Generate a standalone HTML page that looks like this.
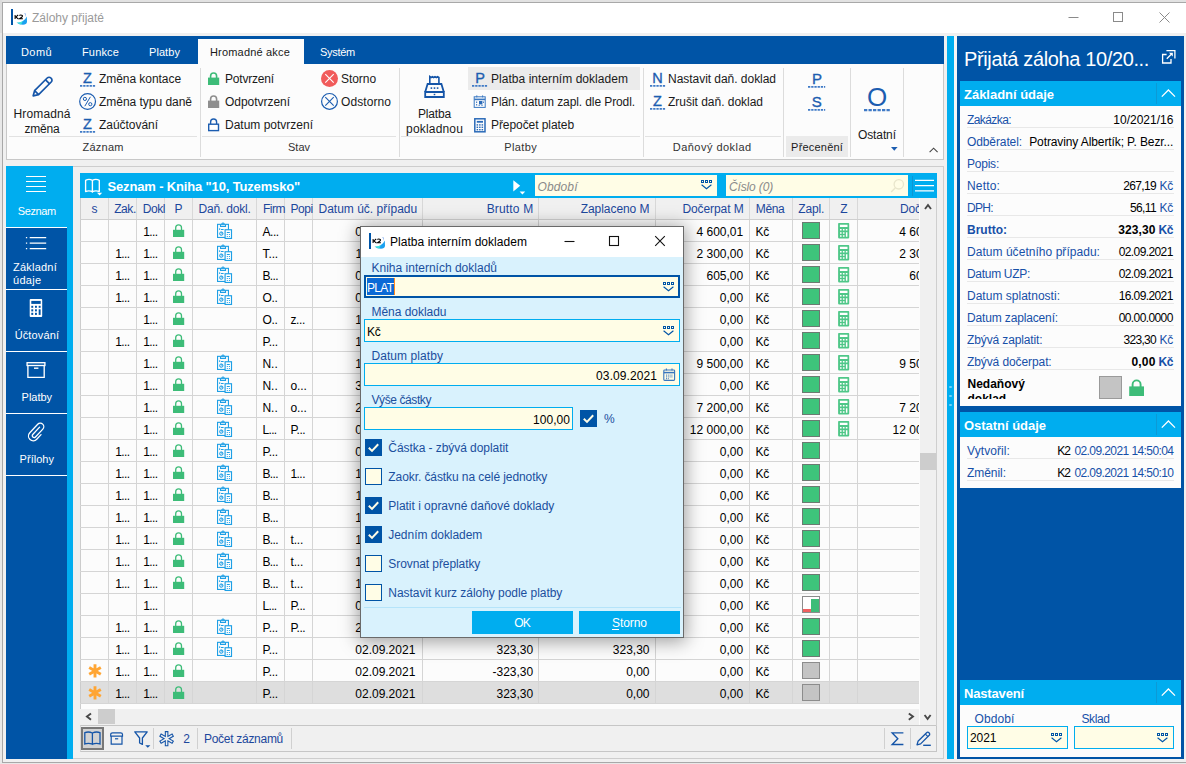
<!DOCTYPE html>
<html><head><meta charset="utf-8"><title>Zálohy přijaté</title>
<style>
html,body{margin:0;padding:0;}
body{width:1186px;height:764px;overflow:hidden;position:relative;background:#f0f0f0;font-family:"Liberation Sans", sans-serif;font-size:12px;}
div{position:absolute;box-sizing:border-box;}
svg{position:absolute;overflow:visible;}
.t{font-family:"Liberation Sans", sans-serif;}
</style></head><body>
<div style="left:0px;top:0px;width:1186px;height:764px;background:#e8e8e8;"></div><div style="left:0px;top:0px;width:1186px;height:2px;background:#e2e2e2;"></div><div style="left:0px;top:0px;width:2px;height:33px;background:#dcdcdc;"></div><div style="left:2px;top:2px;width:1190px;height:761px;background:#f0f0f0;border:1px solid #a8a8a8;"></div><div style="left:3px;top:3px;width:1183px;height:30px;background:#ffffff;"></div><div style="left:11px;top:9px;width:2px;height:16px;background:#0054a6;"></div><svg style="left:14px;top:14px" width="10" height="6" viewBox="0 0 10 6" ><path d="M1.1 1V4.9M4.2 1L1.9 2.95L4.2 4.9M5.4 1.7Q5.6 1 6.9 1Q8.6 1 8.6 2Q8.6 2.9 5.5 4.7H8.9" fill="none" stroke="#000" stroke-width="1.05"/></svg><svg style="left:15px;top:12px" width="13" height="14" viewBox="0 0 13 14"><path d="M1.5 10.5 Q5 11.5 8.5 8.5 Q11 6.5 11.8 4.5 L12 10 Q11.5 12.8 8 12.8 Q4 12.8 1.5 10.5Z" fill="#1aa0f0"/><path d="M1.5 10.5 Q5 11 8 9 L6 12.5Z" fill="#40e8d8"/><path d="M9.5 1 L11 5 L10.3 1.2Z" fill="#3a7be0"/></svg><div class="t" style="top:11.14px;font-size:12px;color:#9a9a9a;line-height:normal;white-space:nowrap;letter-spacing:-0.003px;left:32px;">Zálohy přijaté</div><svg style="left:1060px;top:8px" width="120" height="20"><path d="M8.5 9.5h10" stroke="#8a8a8a" stroke-width="1" fill="none"/><rect x="53.5" y="4.5" width="9" height="9" stroke="#8a8a8a" fill="none"/><path d="M99.5 4.5l10 10M109.5 4.5l-10 10" stroke="#8a8a8a" stroke-width="1" fill="none"/></svg><div style="left:6px;top:36px;width:938px;height:28px;background:#0054a6;"></div><div style="left:6px;top:64px;width:938px;height:96px;background:#fcfcfc;border:1px solid #c8c8c8;border-top:none;"></div><div style="left:198px;top:39px;width:106px;height:25px;background:#fcfcfc;"></div><div class="t" style="top:45.54px;font-size:11px;color:#ffffff;line-height:normal;white-space:nowrap;letter-spacing:0.414px;left:21px;">Domů</div><div class="t" style="top:45.54px;font-size:11px;color:#ffffff;line-height:normal;white-space:nowrap;letter-spacing:0.154px;left:82px;">Funkce</div><div class="t" style="top:45.54px;font-size:11px;color:#ffffff;line-height:normal;white-space:nowrap;letter-spacing:0.070px;left:149px;">Platby</div><div class="t" style="top:45.54px;font-size:11px;color:#1a1a1a;line-height:normal;white-space:nowrap;letter-spacing:0.180px;left:210px;">Hromadné akce</div><div class="t" style="top:45.54px;font-size:11px;color:#ffffff;line-height:normal;white-space:nowrap;letter-spacing:-0.281px;left:320px;">Systém</div><div style="left:200px;top:68px;width:1px;height:89px;background:#dcdcdc;"></div><div style="left:399px;top:68px;width:1px;height:89px;background:#dcdcdc;"></div><div style="left:643px;top:68px;width:1px;height:89px;background:#dcdcdc;"></div><div style="left:783px;top:68px;width:1px;height:89px;background:#dcdcdc;"></div><div style="left:850px;top:68px;width:1px;height:89px;background:#dcdcdc;"></div><div style="left:903px;top:68px;width:1px;height:89px;background:#dcdcdc;"></div><div style="left:9px;top:136px;width:188px;height:1px;background:#e2e2e2;"></div><div style="left:202px;top:136px;width:194px;height:1px;background:#e2e2e2;"></div><div style="left:401px;top:136px;width:239px;height:1px;background:#e2e2e2;"></div><div style="left:645px;top:136px;width:136px;height:1px;background:#e2e2e2;"></div><div style="left:468px;top:67px;width:172px;height:23px;background:#ebebeb;"></div><div style="left:786px;top:136px;width:62px;height:21px;background:#ebebeb;"></div><div class="t" style="top:140.54px;font-size:11px;color:#333333;line-height:normal;white-space:nowrap;letter-spacing:0.208px;left:-196.90px;width:600px;text-align:center;">Záznam</div><div class="t" style="top:140.54px;font-size:11px;color:#333333;line-height:normal;white-space:nowrap;letter-spacing:-0.004px;left:-1.00px;width:600px;text-align:center;">Stav</div><div class="t" style="top:140.54px;font-size:11px;color:#333333;line-height:normal;white-space:nowrap;letter-spacing:0.404px;left:220.70px;width:600px;text-align:center;">Platby</div><div class="t" style="top:140.54px;font-size:11px;color:#333333;line-height:normal;white-space:nowrap;letter-spacing:0.478px;left:412.24px;width:600px;text-align:center;">Daňový doklad</div><div class="t" style="top:140.54px;font-size:11px;color:#1a1a1a;line-height:normal;white-space:nowrap;letter-spacing:0.205px;left:517.10px;width:600px;text-align:center;">Přecenění</div><div class="t" style="top:107.14px;font-size:12px;color:#1a1a1a;line-height:normal;white-space:nowrap;letter-spacing:0.121px;left:-257.94px;width:600px;text-align:center;">Hromadná</div><div class="t" style="top:122.14px;font-size:12px;color:#1a1a1a;line-height:normal;white-space:nowrap;letter-spacing:-0.206px;left:-258.10px;width:600px;text-align:center;">změna</div><div class="t" style="top:72.14px;font-size:12px;color:#1a1a1a;line-height:normal;white-space:nowrap;letter-spacing:-0.055px;left:99px;">Změna kontace</div><div class="t" style="top:95.14px;font-size:12px;color:#1a1a1a;line-height:normal;white-space:nowrap;letter-spacing:-0.027px;left:99px;">Změna typu daně</div><div class="t" style="top:118.14px;font-size:12px;color:#1a1a1a;line-height:normal;white-space:nowrap;letter-spacing:-0.037px;left:99px;">Zaúčtování</div><div class="t" style="top:72.14px;font-size:12px;color:#1a1a1a;line-height:normal;white-space:nowrap;letter-spacing:-0.189px;left:225px;">Potvrzení</div><div class="t" style="top:95.14px;font-size:12px;color:#1a1a1a;line-height:normal;white-space:nowrap;letter-spacing:-0.034px;left:225px;">Odpotvrzení</div><div class="t" style="top:118.14px;font-size:12px;color:#1a1a1a;line-height:normal;white-space:nowrap;letter-spacing:-0.003px;left:225px;">Datum potvrzení</div><div class="t" style="top:72.14px;font-size:12px;color:#1a1a1a;line-height:normal;white-space:nowrap;letter-spacing:-0.060px;left:341px;">Storno</div><div class="t" style="top:95.14px;font-size:12px;color:#1a1a1a;line-height:normal;white-space:nowrap;letter-spacing:0.080px;left:341px;">Odstorno</div><div class="t" style="top:107.14px;font-size:12px;color:#1a1a1a;line-height:normal;white-space:nowrap;letter-spacing:-0.172px;left:134.41px;width:600px;text-align:center;">Platba</div><div class="t" style="top:122.14px;font-size:12px;color:#1a1a1a;line-height:normal;white-space:nowrap;letter-spacing:0.179px;left:134.59px;width:600px;text-align:center;">pokladnou</div><div class="t" style="top:72.14px;font-size:12px;color:#1a1a1a;line-height:normal;white-space:nowrap;letter-spacing:0.038px;left:491px;">Platba interním dokladem</div><div class="t" style="top:95.14px;font-size:12px;color:#1a1a1a;line-height:normal;white-space:nowrap;letter-spacing:-0.098px;left:491px;">Plán. datum zapl. dle Prodl.</div><div class="t" style="top:118.14px;font-size:12px;color:#1a1a1a;line-height:normal;white-space:nowrap;letter-spacing:-0.071px;left:491px;">Přepočet plateb</div><div class="t" style="top:72.14px;font-size:12px;color:#1a1a1a;line-height:normal;white-space:nowrap;letter-spacing:-0.037px;left:668px;">Nastavit daň. doklad</div><div class="t" style="top:95.14px;font-size:12px;color:#1a1a1a;line-height:normal;white-space:nowrap;letter-spacing:-0.022px;left:668px;">Zrušit daň. doklad</div><div class="t" style="top:128.14px;font-size:12px;color:#1a1a1a;line-height:normal;white-space:nowrap;letter-spacing:-0.098px;left:576.95px;width:600px;text-align:center;">Ostatní</div><svg style="left:30px;top:74px" width="26" height="26" viewBox="0 0 26 26" ><g fill="none" stroke="#1555a8" stroke-width="1.7" stroke-linejoin="round"><path d="M3.2 21.8 L4.6 16.6 L17.2 4 a2.6 2.6 0 0 1 3.7 0 l0.3 0.3 a2.6 2.6 0 0 1 0 3.7 L8.6 20.6 Z"/><path d="M15.6 5.8 L19.6 9.8"/><path d="M4.8 16.8 L8.4 20.4"/></g></svg><div class="t" style="top:70.38px;font-size:14.5px;color:#1c5db0;line-height:normal;white-space:nowrap;left:-212.50px;width:600px;text-align:center;-webkit-text-stroke:0.35px #1c5db0;">Z</div><svg style="left:80px;top:85.1px" width="16" height="3" viewBox="0 0 16 3" ><path d="M0 0.9H15.2" stroke="#3f7ac6" stroke-width="1.8" stroke-dasharray="2.3 0.9" fill="none"/></svg><div class="t" style="top:116.38px;font-size:14.5px;color:#1c5db0;line-height:normal;white-space:nowrap;left:-212.50px;width:600px;text-align:center;-webkit-text-stroke:0.35px #1c5db0;">Z</div><svg style="left:80px;top:131.1px" width="16" height="3" viewBox="0 0 16 3" ><path d="M0 0.9H15.2" stroke="#3f7ac6" stroke-width="1.8" stroke-dasharray="2.3 0.9" fill="none"/></svg><svg style="left:78px;top:92px" width="20" height="20" viewBox="0 0 20 20" ><circle cx="9.6" cy="9.5" r="7.9" fill="none" stroke="#1c5db0" stroke-width="1.2"/><circle cx="6.9" cy="6.9" r="1.6" fill="none" stroke="#1c5db0" stroke-width="1"/><circle cx="12.3" cy="12.2" r="1.6" fill="none" stroke="#1c5db0" stroke-width="1"/><path d="M12.4 4.8 L6.8 14.2" stroke="#1c5db0" stroke-width="1" fill="none"/></svg><svg style="left:208px;top:72px" width="12" height="14" viewBox="0 0 12 14" ><path d="M2.6 6.5 V4 a3 3 0 0 1 6 0 V6.5" fill="none" stroke="#3dbc78" stroke-width="1.6"/><rect x="0" y="5.6" width="11.2" height="7.4" fill="#3dbc78"/></svg><svg style="left:208px;top:95px" width="12" height="14" viewBox="0 0 12 14" ><path d="M2.6 6.5 V4 a3 3 0 0 1 6 0 V6.5" fill="none" stroke="#8e8e8e" stroke-width="1.6"/><rect x="0" y="5.6" width="11.2" height="7.4" fill="#8e8e8e"/></svg><svg style="left:208px;top:118px" width="12" height="14" viewBox="0 0 12 14" ><path d="M2.6 6 V4 a3 3 0 0 1 6 0 V6" fill="none" stroke="#1c5db0" stroke-width="1.4"/><rect x="0.7" y="6.2" width="9.8" height="6.4" fill="#fff" stroke="#1c5db0" stroke-width="1.4"/></svg><svg style="left:320px;top:69px" width="20" height="20" viewBox="0 0 20 20" ><circle cx="9.5" cy="9.4" r="8.5" fill="#f15b5b"/><path d="M5.3 5.2l8.4 8.4M13.7 5.2l-8.4 8.4" stroke="#fff" stroke-width="1.1"/></svg><svg style="left:320px;top:92px" width="20" height="20" viewBox="0 0 20 20" ><circle cx="9.5" cy="9.4" r="7.9" fill="none" stroke="#1c5db0" stroke-width="1.2"/><path d="M5.3 5.2l8.4 8.4M13.7 5.2l-8.4 8.4" stroke="#1c5db0" stroke-width="1.1"/></svg><svg style="left:423px;top:74px" width="24" height="26" viewBox="0 0 24 26" ><g fill="none" stroke="#1555a8" stroke-width="1.8" stroke-linejoin="miter"><path d="M2.2 18 H20.8 V23 H2.2 Z"/><path d="M2.2 18 L4.6 10 H18.4 L20.8 18"/><path d="M6.8 10 V2.6 l1.3 .9 1.3 -.9 1.3 .9 1.3 -.9 1.3 .9 1.3 -.9 1.3 .9 V10" stroke-width="1.6"/></g><g fill="#1555a8"><rect x="7.6" y="13.3" width="1.6" height="1.6"/><rect x="10.7" y="13.3" width="1.6" height="1.6"/><rect x="13.8" y="13.3" width="1.6" height="1.6"/><rect x="10.7" y="19.8" width="1.6" height="1.4"/></g></svg><div class="t" style="top:70.38px;font-size:14.5px;color:#1c5db0;line-height:normal;white-space:nowrap;left:180.20px;width:600px;text-align:center;-webkit-text-stroke:0.35px #1c5db0;">P</div><svg style="left:472px;top:85.1px" width="16" height="3" viewBox="0 0 16 3" ><path d="M0 0.9H15.2" stroke="#3f7ac6" stroke-width="1.8" stroke-dasharray="2.3 0.9" fill="none"/></svg><svg style="left:473px;top:95px" width="14" height="14" viewBox="0 0 14 14" ><g fill="none" stroke="#3a78c2" stroke-width="1"><rect x="1.2" y="1.8" width="11" height="10.6"/><path d="M1.2 4.4H12.2" stroke-width="1.6"/><path d="M3.8 0.4V2.4M9.6 0.4V2.4"/></g><g fill="#2a6ab8"><rect x="6" y="6" width="3.4" height="3.4"/><rect x="3" y="6.6" width="1.2" height="1.2"/><rect x="3" y="9.2" width="1.2" height="1.2"/><rect x="5.6" y="9.8" width="1.2" height="1"/><rect x="10" y="6.6" width="1" height="1.2"/><rect x="8.4" y="9.8" width="1.2" height="1"/></g></svg><svg style="left:474px;top:118px" width="12" height="15" viewBox="0 0 12 15" ><rect x="0.8" y="0.8" width="10.2" height="13" fill="none" stroke="#2a6ab8" stroke-width="1.5"/><rect x="2.8" y="2.9" width="6.2" height="1.8" fill="#2a6ab8"/><g fill="#2a6ab8"><rect x="2.6" y="6.2" width="1.5" height="1.4"/><rect x="5.1" y="6.2" width="1.5" height="1.4"/><rect x="7.6" y="6.2" width="1.5" height="1.4"/><rect x="2.6" y="8.6" width="1.5" height="1.4"/><rect x="5.1" y="8.6" width="1.5" height="1.4"/><rect x="7.6" y="8.6" width="1.5" height="1.4"/><rect x="2.6" y="11" width="1.5" height="1.4"/><rect x="5.1" y="11" width="1.5" height="1.4"/><rect x="7.6" y="11" width="1.5" height="1.4"/></g></svg><div class="t" style="top:70.38px;font-size:14.5px;color:#1c5db0;line-height:normal;white-space:nowrap;left:357.50px;width:600px;text-align:center;-webkit-text-stroke:0.35px #1c5db0;">N</div><svg style="left:650px;top:85.1px" width="16" height="3" viewBox="0 0 16 3" ><path d="M0 0.9H15.2" stroke="#3f7ac6" stroke-width="1.8" stroke-dasharray="2.3 0.9" fill="none"/></svg><div class="t" style="top:93.38px;font-size:14.5px;color:#1c5db0;line-height:normal;white-space:nowrap;left:357.50px;width:600px;text-align:center;-webkit-text-stroke:0.35px #1c5db0;">Z</div><svg style="left:650px;top:108.1px" width="16" height="3" viewBox="0 0 16 3" ><path d="M0 0.9H15.2" stroke="#3f7ac6" stroke-width="1.8" stroke-dasharray="2.3 0.9" fill="none"/></svg><div class="t" style="top:70.12px;font-size:15px;color:#1c5db0;line-height:normal;white-space:nowrap;left:517.00px;width:600px;text-align:center;-webkit-text-stroke:0.35px #1c5db0;">P</div><svg style="left:808px;top:86.1px" width="18" height="3" viewBox="0 0 18 3" ><path d="M0 0.9H17.2" stroke="#3f7ac6" stroke-width="1.8" stroke-dasharray="2.3 0.9" fill="none"/></svg><div class="t" style="top:93.22px;font-size:15px;color:#1c5db0;line-height:normal;white-space:nowrap;left:516.70px;width:600px;text-align:center;-webkit-text-stroke:0.35px #1c5db0;">S</div><svg style="left:808px;top:108.8px" width="18" height="3" viewBox="0 0 18 3" ><path d="M0 0.9H17.2" stroke="#3f7ac6" stroke-width="1.8" stroke-dasharray="2.3 0.9" fill="none"/></svg><div class="t" style="top:82.27px;font-size:26px;color:#1c5db0;line-height:normal;white-space:nowrap;left:577.20px;width:600px;text-align:center;">O</div><svg style="left:864px;top:108.9px" width="27" height="3" viewBox="0 0 27 3" ><path d="M0 1.15H26.2" stroke="#3f7ac6" stroke-width="2.3" stroke-dasharray="3.3 1.2" fill="none"/></svg><svg style="left:891px;top:147px" width="8" height="5" viewBox="0 0 8 5" ><path d="M0 0H6.6L3.3 3.8Z" fill="#1c5db0"/></svg><svg style="left:929px;top:147px" width="10" height="6" viewBox="0 0 10 6" ><path d="M0.6 5.2L4.6 1.2L8.6 5.2" fill="none" stroke="#444" stroke-width="1.1"/></svg><div style="left:6px;top:166px;width:67px;height:593px;background:#0054a6;"></div><div style="left:67px;top:166px;width:6px;height:593px;background:#00adef;"></div><div style="left:6px;top:166px;width:67px;height:61px;background:#00adef;"></div><div style="left:6px;top:227px;width:61px;height:1px;background:#ffffff;"></div><div style="left:6px;top:289px;width:61px;height:1px;background:#ffffff;"></div><div style="left:6px;top:351px;width:61px;height:1px;background:#ffffff;"></div><div style="left:6px;top:413px;width:61px;height:1px;background:#ffffff;"></div><div style="left:6px;top:475px;width:61px;height:1px;background:#ffffff;"></div><div style="left:73px;top:166px;width:871px;height:593px;background:#f0f0f0;border:1px solid #cdcdcd;border-left:none;"></div><svg style="left:26px;top:176px" width="20" height="16" viewBox="0 0 20 16" ><path d="M0 .5H20M0 5.5H20M0 10.5H20M0 15.5H20" stroke="#fff" stroke-width="1.1"/></svg><div class="t" style="top:204.84px;font-size:11px;color:#ffffff;line-height:normal;white-space:nowrap;letter-spacing:-0.393px;left:-263.20px;width:600px;text-align:center;">Seznam</div><svg style="left:25px;top:236px" width="24" height="15" viewBox="0 0 24 15" ><path d="M4.7 1.5H21.2M4.7 7.1H21.2M4.7 12.5H21.2" stroke="#fff" stroke-width="1.25"/><path d="M0.9 1.5H2.2M0.9 7.1H2.2M0.9 12.5H2.2" stroke="#fff" stroke-width="1.25"/></svg><div class="t" style="top:261.04px;font-size:11px;color:#ffffff;line-height:normal;white-space:nowrap;letter-spacing:0.225px;left:13px;">Základní</div><div class="t" style="top:274.04px;font-size:11px;color:#ffffff;line-height:normal;white-space:nowrap;letter-spacing:0.316px;left:13px;">údaje</div><svg style="left:29px;top:298px" width="14" height="20" viewBox="0 0 14 20" ><rect x="0.7" y="1" width="12.5" height="18" rx="0.9" fill="#fff"/><g fill="#0054a6"><rect x="2.3" y="2.9" width="9.4" height="3"/><rect x="2.3" y="7.8" width="1.9" height="2"/><rect x="6" y="7.8" width="1.9" height="2"/><rect x="9.7" y="7.8" width="1.9" height="2"/><rect x="2.3" y="11.3" width="1.9" height="2.1"/><rect x="6" y="11.3" width="1.9" height="2.1"/><rect x="2.3" y="14.8" width="1.9" height="2.1"/><rect x="6" y="14.8" width="1.9" height="2.1"/><rect x="9.7" y="11.3" width="1.9" height="5.6"/></g></svg><div class="t" style="top:328.64px;font-size:11px;color:#ffffff;line-height:normal;white-space:nowrap;letter-spacing:0.135px;left:-263.13px;width:600px;text-align:center;">Účtování</div><svg style="left:26px;top:361px" width="20" height="18" viewBox="0 0 20 18" ><rect x="1.1" y="1.7" width="17.8" height="2.8" fill="none" stroke="#fff" stroke-width="1.35"/><path d="M1.9 4.5V16.4H18.2V4.5" fill="none" stroke="#fff" stroke-width="1.35"/><path d="M8 7.2H12.4" stroke="#fff" stroke-width="1.4"/></svg><div class="t" style="top:390.84px;font-size:11px;color:#ffffff;line-height:normal;white-space:nowrap;letter-spacing:-0.030px;left:-263.21px;width:600px;text-align:center;">Platby</div><svg style="left:16px;top:412px" width="40" height="36" viewBox="0 0 40 36" ><path transform="translate(20,20) rotate(43)" d="M5.5 -1.5V4.8A4.75 4.75 0 0 1 -4 4.8V-6.8A3.5 3.5 0 0 1 3 -6.8V4A1.85 1.85 0 0 1 -0.7 4V-6" fill="none" stroke="#fff" stroke-width="1.3" stroke-linecap="round"/></svg><div class="t" style="top:452.74px;font-size:11px;color:#ffffff;line-height:normal;white-space:nowrap;letter-spacing:0.021px;left:-263.19px;width:600px;text-align:center;">Přílohy</div><div style="left:80px;top:173px;width:857px;height:25px;background:#00adef;"></div><svg style="left:84px;top:178px" width="22" height="19" viewBox="0 0 22 19" ><path d="M1.6 2.4 Q5 0.4 8.4 2.4 Q11.8 0.4 15.3 2.4 V13.5 Q11.8 12.2 8.4 13.6 Q5 12.2 1.6 13.5Z M8.4 2.4V14.8" fill="none" stroke="#fff" stroke-width="1.35" stroke-linejoin="round"/><path d="M13 14.8H18.2L15.6 17.4Z" fill="#fff"/></svg><div class="t" style="top:178.83px;font-size:13px;color:#ffffff;line-height:normal;white-space:nowrap;font-weight:bold;letter-spacing:-0.156px;left:107.5px;">Seznam - Kniha "10, Tuzemsko"</div><svg style="left:513px;top:180px" width="12" height="14" viewBox="0 0 12 14" ><path d="M0.3 0.2V11.4L7.2 5.8Z" fill="#fff"/><path d="M6.6 11.6H12.2L9.4 14.4Z" fill="#fff"/></svg><div style="left:535px;top:175px;width:182px;height:21px;background:#fffde6;"></div><div class="t" style="top:179.74px;font-size:12px;color:#8a8a8a;line-height:normal;white-space:nowrap;font-style:italic;letter-spacing:0.104px;left:537.6px;">Období</div><div style="left:726px;top:175px;width:182px;height:21px;background:#fffde6;"></div><div class="t" style="top:179.74px;font-size:12px;color:#8a8a8a;line-height:normal;white-space:nowrap;font-style:italic;letter-spacing:-0.149px;left:729px;">Číslo (0)</div><svg style="left:701px;top:180.4px" width="12" height="10" viewBox="0 0 12 10" ><g fill="none" stroke="#0054a6" stroke-width="1"><rect x="0.5" y="0.5" width="2" height="2"/><rect x="4.5" y="0.5" width="2" height="2"/><rect x="8.5" y="0.5" width="2" height="2"/><path d="M0.6 4.8L5.5 8.8L10.4 4.8" stroke-width="1.1"/></g></svg><svg style="left:888px;top:177px" width="18" height="18" viewBox="0 0 18 18" ><circle cx="10.8" cy="7.3" r="4.7" fill="none" stroke="#e9e6cc" stroke-width="1.3"/><path d="M7.4 10.8L3.2 15" stroke="#e9e6cc" stroke-width="1.4"/></svg><div style="left:912px;top:176px;width:1px;height:20px;background:#0c96d4;"></div><svg style="left:915px;top:179px" width="20" height="14" viewBox="0 0 20 14" ><path d="M0 1.4H19M0 6.6H19M0 11.8H19" stroke="#fff" stroke-width="1.3"/></svg><div style="left:80px;top:198px;width:857px;height:527px;background:#f0f0f0;"></div><div style="left:80px;top:220px;width:840px;height:483px;background:#fcfcfc;"></div><div style="left:80px;top:703px;width:840px;height:6px;background:#fcfcfc;"></div><div style="left:80px;top:681px;width:840px;height:22px;background:#dedede;"></div><div style="left:108px;top:198px;width:1px;height:21px;background:#d8d8d8;"></div><div style="left:108px;top:220px;width:1px;height:483px;background:#d5d5d5;"></div><div style="left:136px;top:198px;width:1px;height:21px;background:#d8d8d8;"></div><div style="left:136px;top:220px;width:1px;height:483px;background:#d5d5d5;"></div><div style="left:164px;top:198px;width:1px;height:21px;background:#d8d8d8;"></div><div style="left:164px;top:220px;width:1px;height:483px;background:#d5d5d5;"></div><div style="left:192px;top:198px;width:1px;height:21px;background:#d8d8d8;"></div><div style="left:192px;top:220px;width:1px;height:483px;background:#d5d5d5;"></div><div style="left:256px;top:198px;width:1px;height:21px;background:#d8d8d8;"></div><div style="left:256px;top:220px;width:1px;height:483px;background:#d5d5d5;"></div><div style="left:284px;top:198px;width:1px;height:21px;background:#d8d8d8;"></div><div style="left:284px;top:220px;width:1px;height:483px;background:#d5d5d5;"></div><div style="left:312px;top:198px;width:1px;height:21px;background:#d8d8d8;"></div><div style="left:312px;top:220px;width:1px;height:483px;background:#d5d5d5;"></div><div style="left:422px;top:198px;width:1px;height:21px;background:#d8d8d8;"></div><div style="left:422px;top:220px;width:1px;height:483px;background:#d5d5d5;"></div><div style="left:538px;top:198px;width:1px;height:21px;background:#d8d8d8;"></div><div style="left:538px;top:220px;width:1px;height:483px;background:#d5d5d5;"></div><div style="left:655px;top:198px;width:1px;height:21px;background:#d8d8d8;"></div><div style="left:655px;top:220px;width:1px;height:483px;background:#d5d5d5;"></div><div style="left:749px;top:198px;width:1px;height:21px;background:#d8d8d8;"></div><div style="left:749px;top:220px;width:1px;height:483px;background:#d5d5d5;"></div><div style="left:792px;top:198px;width:1px;height:21px;background:#d8d8d8;"></div><div style="left:792px;top:220px;width:1px;height:483px;background:#d5d5d5;"></div><div style="left:829px;top:198px;width:1px;height:21px;background:#d8d8d8;"></div><div style="left:829px;top:220px;width:1px;height:483px;background:#d5d5d5;"></div><div style="left:857px;top:198px;width:1px;height:21px;background:#d8d8d8;"></div><div style="left:857px;top:220px;width:1px;height:483px;background:#d5d5d5;"></div><div style="left:80px;top:198px;width:1px;height:511px;background:#cccccc;"></div><div style="left:80px;top:219px;width:840px;height:1px;background:#cfcfcf;"></div><div style="left:80px;top:241px;width:840px;height:1px;background:#d5d5d5;"></div><div style="left:80px;top:263px;width:840px;height:1px;background:#d5d5d5;"></div><div style="left:80px;top:285px;width:840px;height:1px;background:#d5d5d5;"></div><div style="left:80px;top:307px;width:840px;height:1px;background:#d5d5d5;"></div><div style="left:80px;top:329px;width:840px;height:1px;background:#d5d5d5;"></div><div style="left:80px;top:351px;width:840px;height:1px;background:#d5d5d5;"></div><div style="left:80px;top:373px;width:840px;height:1px;background:#d5d5d5;"></div><div style="left:80px;top:395px;width:840px;height:1px;background:#d5d5d5;"></div><div style="left:80px;top:417px;width:840px;height:1px;background:#d5d5d5;"></div><div style="left:80px;top:439px;width:840px;height:1px;background:#d5d5d5;"></div><div style="left:80px;top:461px;width:840px;height:1px;background:#d5d5d5;"></div><div style="left:80px;top:483px;width:840px;height:1px;background:#d5d5d5;"></div><div style="left:80px;top:505px;width:840px;height:1px;background:#d5d5d5;"></div><div style="left:80px;top:527px;width:840px;height:1px;background:#d5d5d5;"></div><div style="left:80px;top:549px;width:840px;height:1px;background:#d5d5d5;"></div><div style="left:80px;top:571px;width:840px;height:1px;background:#d5d5d5;"></div><div style="left:80px;top:593px;width:840px;height:1px;background:#d5d5d5;"></div><div style="left:80px;top:615px;width:840px;height:1px;background:#d5d5d5;"></div><div style="left:80px;top:637px;width:840px;height:1px;background:#d5d5d5;"></div><div style="left:80px;top:659px;width:840px;height:1px;background:#d5d5d5;"></div><div style="left:80px;top:681px;width:840px;height:1px;background:#d5d5d5;"></div><div style="left:80px;top:703px;width:840px;height:1px;background:#d5d5d5;"></div><div style="left:80px;top:198px;width:840px;height:510px;overflow:hidden;"><div class="t" style="top:3.74px;font-size:12px;color:#1c479c;line-height:normal;white-space:nowrap;left:-185.40px;width:400px;text-align:center;">s</div><div class="t" style="top:3.74px;font-size:12px;color:#1c479c;line-height:normal;white-space:nowrap;letter-spacing:-0.436px;left:34.2px;width:22px;overflow:hidden;">Zak.</div><div class="t" style="top:3.74px;font-size:12px;color:#1c479c;line-height:normal;white-space:nowrap;letter-spacing:-0.454px;left:62.80000000000001px;width:23px;overflow:hidden;">Dokl</div><div class="t" style="top:3.74px;font-size:12px;color:#1c479c;line-height:normal;white-space:nowrap;left:-101.50px;width:400px;text-align:center;">P</div><div class="t" style="top:3.74px;font-size:12px;color:#1c479c;line-height:normal;white-space:nowrap;letter-spacing:-0.203px;left:-55.40px;width:400px;text-align:center;">Daň. dokl.</div><div class="t" style="top:3.74px;font-size:12px;color:#1c479c;line-height:normal;white-space:nowrap;letter-spacing:-0.500px;left:183px;width:23px;overflow:hidden;">Firm</div><div class="t" style="top:3.74px;font-size:12px;color:#1c479c;line-height:normal;white-space:nowrap;letter-spacing:-0.458px;left:210.5px;width:23px;overflow:hidden;">Popi</div><div class="t" style="top:3.74px;font-size:12px;color:#1c479c;line-height:normal;white-space:nowrap;letter-spacing:-0.001px;left:238.5px;">Datum úč. případu</div><div class="t" style="top:3.74px;font-size:12px;color:#1c479c;line-height:normal;white-space:nowrap;letter-spacing:0.168px;left:53.37px;width:400px;text-align:right;">Brutto M</div><div class="t" style="top:3.74px;font-size:12px;color:#1c479c;line-height:normal;white-space:nowrap;letter-spacing:-0.061px;left:169.44px;width:400px;text-align:right;">Zaplaceno M</div><div class="t" style="top:3.74px;font-size:12px;color:#1c479c;line-height:normal;white-space:nowrap;letter-spacing:-0.083px;left:263.62px;width:400px;text-align:right;">Dočerpat M</div><div class="t" style="top:3.74px;font-size:12px;color:#1c479c;line-height:normal;white-space:nowrap;letter-spacing:-0.308px;left:675.7px;">Měna</div><div class="t" style="top:3.74px;font-size:12px;color:#1c479c;line-height:normal;white-space:nowrap;letter-spacing:-0.138px;left:718.2px;">Zapl.</div><div class="t" style="top:3.74px;font-size:12px;color:#1c479c;line-height:normal;white-space:nowrap;left:563.80px;width:400px;text-align:center;">Z</div><div class="t" style="top:3.74px;font-size:12px;color:#1c479c;line-height:normal;white-space:nowrap;letter-spacing:-0.213px;left:820px;">Dočerpat</div><div class="t" style="top:26.84px;font-size:12px;color:#000;line-height:normal;white-space:nowrap;letter-spacing:-0.572px;left:63.19999999999999px;">1...</div><svg style="left:93px;top:26px" width="12" height="14"><path d="M2.7 6.5 V3.7 a2.9 2.9 0 0 1 5.8 0 V6.5" fill="none" stroke="#3dbc78" stroke-width="1.3"/><rect x="0" y="5.8" width="11.2" height="7.2" fill="#3dbc78"/></svg><svg style="left:137px;top:24px" width="16" height="18"><g fill="none" stroke="#1e9fe5" stroke-width="1.1"><rect x="0.55" y="2.35" width="10.9" height="13.1"/><path d="M3.5 2.4V4.4H8.5V2.4M4.6 2.2Q6 -0.2 7.4 2.2"/><circle cx="4.3" cy="11.6" r="1.7" fill="#cfeaf9" stroke-width="1"/></g><rect x="8.1" y="7.75" width="6.4" height="8.7" fill="#fff" stroke="#1e9fe5" stroke-width="1.15"/><path fill="#1e9fe5" d="M2.2 6.3h1v1.8h-1zM4 6.9h2.6v1H4zM9.8 10h3v1h-3zM9.8 11.9h1v1h-1zM11.9 11.9h1v1h-1zM9.8 13.9h1v1h-1zM11.9 13.9h1v1h-1zM4.3 11.6V9.9A1.7 1.7 0 0 1 6 11.6Z"/></svg><div class="t" style="top:26.84px;font-size:12px;color:#000;line-height:normal;white-space:nowrap;letter-spacing:-0.479px;left:182.5px;">A...</div><div class="t" style="top:26.84px;font-size:12px;color:#000;line-height:normal;white-space:nowrap;letter-spacing:-0.006px;left:-64.71px;width:400px;text-align:right;">02.02.2021</div><div class="t" style="top:26.84px;font-size:12px;color:#000;line-height:normal;white-space:nowrap;left:53.20px;width:400px;text-align:right;">4 600,01</div><div class="t" style="top:26.84px;font-size:12px;color:#000;line-height:normal;white-space:nowrap;left:169.50px;width:400px;text-align:right;">0,00</div><div class="t" style="top:26.84px;font-size:12px;color:#000;line-height:normal;white-space:nowrap;left:263.20px;width:400px;text-align:right;">4 600,01</div><div class="t" style="top:26.84px;font-size:12px;color:#000;line-height:normal;white-space:nowrap;letter-spacing:-0.258px;left:675.5px;">Kč</div><div style="left:722px;top:24px;width:18px;height:17px;background:#3ec47b;border:1px solid #6c7a72;"></div><svg style="left:758px;top:25px" width="12" height="16"><rect x="0.1" y="0" width="11.1" height="15.4" rx="0.8" fill="#4fc788"/><path fill="#fff" d="M1.9 1.7h7.6v2.3H1.9zM2 6h1.6v1.5H2zM4.9 6h1.6v1.5H4.9zM7.8 6h1.6v1.5H7.8zM2 9.2h1.6v1.5H2zM4.9 9.2h1.6v1.5H4.9zM2 12.3h1.6v1.5H2zM4.9 12.3h1.6v1.5H4.9zM7.9 9.2h1.5v4.6H7.9z"/></svg><div class="t" style="top:26.84px;font-size:12px;color:#000;line-height:normal;white-space:nowrap;left:466.00px;width:400px;text-align:right;">4 600,01</div><div class="t" style="top:48.84px;font-size:12px;color:#000;line-height:normal;white-space:nowrap;letter-spacing:-0.572px;left:35.2px;">1...</div><div class="t" style="top:48.84px;font-size:12px;color:#000;line-height:normal;white-space:nowrap;letter-spacing:-0.572px;left:63.19999999999999px;">1...</div><svg style="left:93px;top:48px" width="12" height="14"><path d="M2.7 6.5 V3.7 a2.9 2.9 0 0 1 5.8 0 V6.5" fill="none" stroke="#3dbc78" stroke-width="1.3"/><rect x="0" y="5.8" width="11.2" height="7.2" fill="#3dbc78"/></svg><svg style="left:137px;top:46px" width="16" height="18"><g fill="none" stroke="#1e9fe5" stroke-width="1.1"><rect x="0.55" y="2.35" width="10.9" height="13.1"/><path d="M3.5 2.4V4.4H8.5V2.4M4.6 2.2Q6 -0.2 7.4 2.2"/><circle cx="4.3" cy="11.6" r="1.7" fill="#cfeaf9" stroke-width="1"/></g><rect x="8.1" y="7.75" width="6.4" height="8.7" fill="#fff" stroke="#1e9fe5" stroke-width="1.15"/><path fill="#1e9fe5" d="M2.2 6.3h1v1.8h-1zM4 6.9h2.6v1H4zM9.8 10h3v1h-3zM9.8 11.9h1v1h-1zM11.9 11.9h1v1h-1zM9.8 13.9h1v1h-1zM11.9 13.9h1v1h-1zM4.3 11.6V9.9A1.7 1.7 0 0 1 6 11.6Z"/></svg><div class="t" style="top:48.84px;font-size:12px;color:#000;line-height:normal;white-space:nowrap;letter-spacing:-0.104px;left:182.5px;">T...</div><div class="t" style="top:48.84px;font-size:12px;color:#000;line-height:normal;white-space:nowrap;letter-spacing:0.083px;left:-64.62px;width:400px;text-align:right;">11.02.2021</div><div class="t" style="top:48.84px;font-size:12px;color:#000;line-height:normal;white-space:nowrap;left:53.20px;width:400px;text-align:right;">2 300,00</div><div class="t" style="top:48.84px;font-size:12px;color:#000;line-height:normal;white-space:nowrap;left:169.50px;width:400px;text-align:right;">0,00</div><div class="t" style="top:48.84px;font-size:12px;color:#000;line-height:normal;white-space:nowrap;left:263.20px;width:400px;text-align:right;">2 300,00</div><div class="t" style="top:48.84px;font-size:12px;color:#000;line-height:normal;white-space:nowrap;letter-spacing:-0.258px;left:675.5px;">Kč</div><div style="left:722px;top:46px;width:18px;height:17px;background:#3ec47b;border:1px solid #6c7a72;"></div><svg style="left:758px;top:47px" width="12" height="16"><rect x="0.1" y="0" width="11.1" height="15.4" rx="0.8" fill="#4fc788"/><path fill="#fff" d="M1.9 1.7h7.6v2.3H1.9zM2 6h1.6v1.5H2zM4.9 6h1.6v1.5H4.9zM7.8 6h1.6v1.5H7.8zM2 9.2h1.6v1.5H2zM4.9 9.2h1.6v1.5H4.9zM2 12.3h1.6v1.5H2zM4.9 12.3h1.6v1.5H4.9zM7.9 9.2h1.5v4.6H7.9z"/></svg><div class="t" style="top:48.84px;font-size:12px;color:#000;line-height:normal;white-space:nowrap;left:466.00px;width:400px;text-align:right;">2 300,00</div><div class="t" style="top:70.84px;font-size:12px;color:#000;line-height:normal;white-space:nowrap;letter-spacing:-0.572px;left:35.2px;">1...</div><div class="t" style="top:70.84px;font-size:12px;color:#000;line-height:normal;white-space:nowrap;letter-spacing:-0.572px;left:63.19999999999999px;">1...</div><svg style="left:93px;top:70px" width="12" height="14"><path d="M2.7 6.5 V3.7 a2.9 2.9 0 0 1 5.8 0 V6.5" fill="none" stroke="#3dbc78" stroke-width="1.3"/><rect x="0" y="5.8" width="11.2" height="7.2" fill="#3dbc78"/></svg><svg style="left:137px;top:68px" width="16" height="18"><g fill="none" stroke="#1e9fe5" stroke-width="1.1"><rect x="0.55" y="2.35" width="10.9" height="13.1"/><path d="M3.5 2.4V4.4H8.5V2.4M4.6 2.2Q6 -0.2 7.4 2.2"/><circle cx="4.3" cy="11.6" r="1.7" fill="#cfeaf9" stroke-width="1"/></g><rect x="8.1" y="7.75" width="6.4" height="8.7" fill="#fff" stroke="#1e9fe5" stroke-width="1.15"/><path fill="#1e9fe5" d="M2.2 6.3h1v1.8h-1zM4 6.9h2.6v1H4zM9.8 10h3v1h-3zM9.8 11.9h1v1h-1zM11.9 11.9h1v1h-1zM9.8 13.9h1v1h-1zM11.9 13.9h1v1h-1zM4.3 11.6V9.9A1.7 1.7 0 0 1 6 11.6Z"/></svg><div class="t" style="top:70.84px;font-size:12px;color:#000;line-height:normal;white-space:nowrap;letter-spacing:-0.679px;left:182.5px;">B...</div><div class="t" style="top:70.84px;font-size:12px;color:#000;line-height:normal;white-space:nowrap;letter-spacing:-0.006px;left:-64.71px;width:400px;text-align:right;">01.03.2021</div><div class="t" style="top:70.84px;font-size:12px;color:#000;line-height:normal;white-space:nowrap;left:53.20px;width:400px;text-align:right;">605,00</div><div class="t" style="top:70.84px;font-size:12px;color:#000;line-height:normal;white-space:nowrap;left:169.50px;width:400px;text-align:right;">0,00</div><div class="t" style="top:70.84px;font-size:12px;color:#000;line-height:normal;white-space:nowrap;left:263.20px;width:400px;text-align:right;">605,00</div><div class="t" style="top:70.84px;font-size:12px;color:#000;line-height:normal;white-space:nowrap;letter-spacing:-0.258px;left:675.5px;">Kč</div><div style="left:722px;top:68px;width:18px;height:17px;background:#3ec47b;border:1px solid #6c7a72;"></div><svg style="left:758px;top:69px" width="12" height="16"><rect x="0.1" y="0" width="11.1" height="15.4" rx="0.8" fill="#4fc788"/><path fill="#fff" d="M1.9 1.7h7.6v2.3H1.9zM2 6h1.6v1.5H2zM4.9 6h1.6v1.5H4.9zM7.8 6h1.6v1.5H7.8zM2 9.2h1.6v1.5H2zM4.9 9.2h1.6v1.5H4.9zM2 12.3h1.6v1.5H2zM4.9 12.3h1.6v1.5H4.9zM7.9 9.2h1.5v4.6H7.9z"/></svg><div class="t" style="top:70.84px;font-size:12px;color:#000;line-height:normal;white-space:nowrap;left:466.00px;width:400px;text-align:right;">605,00</div><div class="t" style="top:92.84px;font-size:12px;color:#000;line-height:normal;white-space:nowrap;letter-spacing:-0.572px;left:35.2px;">1...</div><div class="t" style="top:92.84px;font-size:12px;color:#000;line-height:normal;white-space:nowrap;letter-spacing:-0.572px;left:63.19999999999999px;">1...</div><svg style="left:93px;top:92px" width="12" height="14"><path d="M2.7 6.5 V3.7 a2.9 2.9 0 0 1 5.8 0 V6.5" fill="none" stroke="#3dbc78" stroke-width="1.3"/><rect x="0" y="5.8" width="11.2" height="7.2" fill="#3dbc78"/></svg><svg style="left:137px;top:90px" width="16" height="18"><g fill="none" stroke="#1e9fe5" stroke-width="1.1"><rect x="0.55" y="2.35" width="10.9" height="13.1"/><path d="M3.5 2.4V4.4H8.5V2.4M4.6 2.2Q6 -0.2 7.4 2.2"/><circle cx="4.3" cy="11.6" r="1.7" fill="#cfeaf9" stroke-width="1"/></g><rect x="8.1" y="7.75" width="6.4" height="8.7" fill="#fff" stroke="#1e9fe5" stroke-width="1.15"/><path fill="#1e9fe5" d="M2.2 6.3h1v1.8h-1zM4 6.9h2.6v1H4zM9.8 10h3v1h-3zM9.8 11.9h1v1h-1zM11.9 11.9h1v1h-1zM9.8 13.9h1v1h-1zM11.9 13.9h1v1h-1zM4.3 11.6V9.9A1.7 1.7 0 0 1 6 11.6Z"/></svg><div class="t" style="top:92.84px;font-size:12px;color:#000;line-height:normal;white-space:nowrap;letter-spacing:-0.272px;left:182.5px;">O..</div><div class="t" style="top:92.84px;font-size:12px;color:#000;line-height:normal;white-space:nowrap;letter-spacing:-0.006px;left:-64.71px;width:400px;text-align:right;">05.03.2021</div><div class="t" style="top:92.84px;font-size:12px;color:#000;line-height:normal;white-space:nowrap;left:53.20px;width:400px;text-align:right;">1 000,00</div><div class="t" style="top:92.84px;font-size:12px;color:#000;line-height:normal;white-space:nowrap;left:169.50px;width:400px;text-align:right;">1 000,00</div><div class="t" style="top:92.84px;font-size:12px;color:#000;line-height:normal;white-space:nowrap;left:263.20px;width:400px;text-align:right;">0,00</div><div class="t" style="top:92.84px;font-size:12px;color:#000;line-height:normal;white-space:nowrap;letter-spacing:-0.258px;left:675.5px;">Kč</div><div style="left:722px;top:90px;width:18px;height:17px;background:#3ec47b;border:1px solid #6c7a72;"></div><svg style="left:758px;top:91px" width="12" height="16"><rect x="0.1" y="0" width="11.1" height="15.4" rx="0.8" fill="#4fc788"/><path fill="#fff" d="M1.9 1.7h7.6v2.3H1.9zM2 6h1.6v1.5H2zM4.9 6h1.6v1.5H4.9zM7.8 6h1.6v1.5H7.8zM2 9.2h1.6v1.5H2zM4.9 9.2h1.6v1.5H4.9zM2 12.3h1.6v1.5H2zM4.9 12.3h1.6v1.5H4.9zM7.9 9.2h1.5v4.6H7.9z"/></svg><div class="t" style="top:114.84px;font-size:12px;color:#000;line-height:normal;white-space:nowrap;letter-spacing:-0.572px;left:63.19999999999999px;">1...</div><svg style="left:93px;top:114px" width="12" height="14"><path d="M2.7 6.5 V3.7 a2.9 2.9 0 0 1 5.8 0 V6.5" fill="none" stroke="#3dbc78" stroke-width="1.3"/><rect x="0" y="5.8" width="11.2" height="7.2" fill="#3dbc78"/></svg><div class="t" style="top:114.84px;font-size:12px;color:#000;line-height:normal;white-space:nowrap;letter-spacing:-0.272px;left:182.5px;">O..</div><div class="t" style="top:114.84px;font-size:12px;color:#000;line-height:normal;white-space:nowrap;letter-spacing:-0.429px;left:210.5px;">z...</div><div class="t" style="top:114.84px;font-size:12px;color:#000;line-height:normal;white-space:nowrap;letter-spacing:-0.006px;left:-64.71px;width:400px;text-align:right;">12.03.2021</div><div class="t" style="top:114.84px;font-size:12px;color:#000;line-height:normal;white-space:nowrap;left:53.20px;width:400px;text-align:right;">500,00</div><div class="t" style="top:114.84px;font-size:12px;color:#000;line-height:normal;white-space:nowrap;left:169.50px;width:400px;text-align:right;">500,00</div><div class="t" style="top:114.84px;font-size:12px;color:#000;line-height:normal;white-space:nowrap;left:263.20px;width:400px;text-align:right;">0,00</div><div class="t" style="top:114.84px;font-size:12px;color:#000;line-height:normal;white-space:nowrap;letter-spacing:-0.258px;left:675.5px;">Kč</div><div style="left:722px;top:112px;width:18px;height:17px;background:#3ec47b;border:1px solid #6c7a72;"></div><svg style="left:758px;top:113px" width="12" height="16"><rect x="0.1" y="0" width="11.1" height="15.4" rx="0.8" fill="#4fc788"/><path fill="#fff" d="M1.9 1.7h7.6v2.3H1.9zM2 6h1.6v1.5H2zM4.9 6h1.6v1.5H4.9zM7.8 6h1.6v1.5H7.8zM2 9.2h1.6v1.5H2zM4.9 9.2h1.6v1.5H4.9zM2 12.3h1.6v1.5H2zM4.9 12.3h1.6v1.5H4.9zM7.9 9.2h1.5v4.6H7.9z"/></svg><div class="t" style="top:136.84px;font-size:12px;color:#000;line-height:normal;white-space:nowrap;letter-spacing:-0.572px;left:35.2px;">1...</div><div class="t" style="top:136.84px;font-size:12px;color:#000;line-height:normal;white-space:nowrap;letter-spacing:-0.572px;left:63.19999999999999px;">1...</div><svg style="left:93px;top:136px" width="12" height="14"><path d="M2.7 6.5 V3.7 a2.9 2.9 0 0 1 5.8 0 V6.5" fill="none" stroke="#3dbc78" stroke-width="1.3"/><rect x="0" y="5.8" width="11.2" height="7.2" fill="#3dbc78"/></svg><div class="t" style="top:136.84px;font-size:12px;color:#000;line-height:normal;white-space:nowrap;letter-spacing:-0.317px;left:182.5px;">P...</div><div class="t" style="top:136.84px;font-size:12px;color:#000;line-height:normal;white-space:nowrap;letter-spacing:-0.006px;left:-64.71px;width:400px;text-align:right;">15.03.2021</div><div class="t" style="top:136.84px;font-size:12px;color:#000;line-height:normal;white-space:nowrap;left:53.20px;width:400px;text-align:right;">200,00</div><div class="t" style="top:136.84px;font-size:12px;color:#000;line-height:normal;white-space:nowrap;left:169.50px;width:400px;text-align:right;">200,00</div><div class="t" style="top:136.84px;font-size:12px;color:#000;line-height:normal;white-space:nowrap;left:263.20px;width:400px;text-align:right;">0,00</div><div class="t" style="top:136.84px;font-size:12px;color:#000;line-height:normal;white-space:nowrap;letter-spacing:-0.258px;left:675.5px;">Kč</div><div style="left:722px;top:134px;width:18px;height:17px;background:#3ec47b;border:1px solid #6c7a72;"></div><svg style="left:758px;top:135px" width="12" height="16"><rect x="0.1" y="0" width="11.1" height="15.4" rx="0.8" fill="#4fc788"/><path fill="#fff" d="M1.9 1.7h7.6v2.3H1.9zM2 6h1.6v1.5H2zM4.9 6h1.6v1.5H4.9zM7.8 6h1.6v1.5H7.8zM2 9.2h1.6v1.5H2zM4.9 9.2h1.6v1.5H4.9zM2 12.3h1.6v1.5H2zM4.9 12.3h1.6v1.5H4.9zM7.9 9.2h1.5v4.6H7.9z"/></svg><div class="t" style="top:158.84px;font-size:12px;color:#000;line-height:normal;white-space:nowrap;letter-spacing:-0.572px;left:63.19999999999999px;">1...</div><svg style="left:93px;top:158px" width="12" height="14"><path d="M2.7 6.5 V3.7 a2.9 2.9 0 0 1 5.8 0 V6.5" fill="none" stroke="#3dbc78" stroke-width="1.3"/><rect x="0" y="5.8" width="11.2" height="7.2" fill="#3dbc78"/></svg><svg style="left:137px;top:156px" width="16" height="18"><g fill="none" stroke="#1e9fe5" stroke-width="1.1"><rect x="0.55" y="2.35" width="10.9" height="13.1"/><path d="M3.5 2.4V4.4H8.5V2.4M4.6 2.2Q6 -0.2 7.4 2.2"/><circle cx="4.3" cy="11.6" r="1.7" fill="#cfeaf9" stroke-width="1"/></g><rect x="8.1" y="7.75" width="6.4" height="8.7" fill="#fff" stroke="#1e9fe5" stroke-width="1.15"/><path fill="#1e9fe5" d="M2.2 6.3h1v1.8h-1zM4 6.9h2.6v1H4zM9.8 10h3v1h-3zM9.8 11.9h1v1h-1zM11.9 11.9h1v1h-1zM9.8 13.9h1v1h-1zM11.9 13.9h1v1h-1zM4.3 11.6V9.9A1.7 1.7 0 0 1 6 11.6Z"/></svg><div class="t" style="top:158.84px;font-size:12px;color:#000;line-height:normal;white-space:nowrap;letter-spacing:-0.048px;left:182.5px;">N..</div><div class="t" style="top:158.84px;font-size:12px;color:#000;line-height:normal;white-space:nowrap;letter-spacing:-0.006px;left:-64.71px;width:400px;text-align:right;">18.04.2021</div><div class="t" style="top:158.84px;font-size:12px;color:#000;line-height:normal;white-space:nowrap;left:53.20px;width:400px;text-align:right;">9 500,00</div><div class="t" style="top:158.84px;font-size:12px;color:#000;line-height:normal;white-space:nowrap;left:169.50px;width:400px;text-align:right;">0,00</div><div class="t" style="top:158.84px;font-size:12px;color:#000;line-height:normal;white-space:nowrap;left:263.20px;width:400px;text-align:right;">9 500,00</div><div class="t" style="top:158.84px;font-size:12px;color:#000;line-height:normal;white-space:nowrap;letter-spacing:-0.258px;left:675.5px;">Kč</div><div style="left:722px;top:156px;width:18px;height:17px;background:#3ec47b;border:1px solid #6c7a72;"></div><svg style="left:758px;top:157px" width="12" height="16"><rect x="0.1" y="0" width="11.1" height="15.4" rx="0.8" fill="#4fc788"/><path fill="#fff" d="M1.9 1.7h7.6v2.3H1.9zM2 6h1.6v1.5H2zM4.9 6h1.6v1.5H4.9zM7.8 6h1.6v1.5H7.8zM2 9.2h1.6v1.5H2zM4.9 9.2h1.6v1.5H4.9zM2 12.3h1.6v1.5H2zM4.9 12.3h1.6v1.5H4.9zM7.9 9.2h1.5v4.6H7.9z"/></svg><div class="t" style="top:158.84px;font-size:12px;color:#000;line-height:normal;white-space:nowrap;left:466.00px;width:400px;text-align:right;">9 500,00</div><div class="t" style="top:180.84px;font-size:12px;color:#000;line-height:normal;white-space:nowrap;letter-spacing:-0.572px;left:63.19999999999999px;">1...</div><svg style="left:93px;top:180px" width="12" height="14"><path d="M2.7 6.5 V3.7 a2.9 2.9 0 0 1 5.8 0 V6.5" fill="none" stroke="#3dbc78" stroke-width="1.3"/><rect x="0" y="5.8" width="11.2" height="7.2" fill="#3dbc78"/></svg><svg style="left:137px;top:178px" width="16" height="18"><g fill="none" stroke="#1e9fe5" stroke-width="1.1"><rect x="0.55" y="2.35" width="10.9" height="13.1"/><path d="M3.5 2.4V4.4H8.5V2.4M4.6 2.2Q6 -0.2 7.4 2.2"/><circle cx="4.3" cy="11.6" r="1.7" fill="#cfeaf9" stroke-width="1"/></g><rect x="8.1" y="7.75" width="6.4" height="8.7" fill="#fff" stroke="#1e9fe5" stroke-width="1.15"/><path fill="#1e9fe5" d="M2.2 6.3h1v1.8h-1zM4 6.9h2.6v1H4zM9.8 10h3v1h-3zM9.8 11.9h1v1h-1zM11.9 11.9h1v1h-1zM9.8 13.9h1v1h-1zM11.9 13.9h1v1h-1zM4.3 11.6V9.9A1.7 1.7 0 0 1 6 11.6Z"/></svg><div class="t" style="top:180.84px;font-size:12px;color:#000;line-height:normal;white-space:nowrap;letter-spacing:-0.048px;left:182.5px;">N..</div><div class="t" style="top:180.84px;font-size:12px;color:#000;line-height:normal;white-space:nowrap;letter-spacing:-0.147px;left:210.5px;">o...</div><div class="t" style="top:180.84px;font-size:12px;color:#000;line-height:normal;white-space:nowrap;letter-spacing:-0.006px;left:-64.71px;width:400px;text-align:right;">30.04.2021</div><div class="t" style="top:180.84px;font-size:12px;color:#000;line-height:normal;white-space:nowrap;left:53.20px;width:400px;text-align:right;">3 000,00</div><div class="t" style="top:180.84px;font-size:12px;color:#000;line-height:normal;white-space:nowrap;left:169.50px;width:400px;text-align:right;">3 000,00</div><div class="t" style="top:180.84px;font-size:12px;color:#000;line-height:normal;white-space:nowrap;left:263.20px;width:400px;text-align:right;">0,00</div><div class="t" style="top:180.84px;font-size:12px;color:#000;line-height:normal;white-space:nowrap;letter-spacing:-0.258px;left:675.5px;">Kč</div><div style="left:722px;top:178px;width:18px;height:17px;background:#3ec47b;border:1px solid #6c7a72;"></div><svg style="left:758px;top:179px" width="12" height="16"><rect x="0.1" y="0" width="11.1" height="15.4" rx="0.8" fill="#4fc788"/><path fill="#fff" d="M1.9 1.7h7.6v2.3H1.9zM2 6h1.6v1.5H2zM4.9 6h1.6v1.5H4.9zM7.8 6h1.6v1.5H7.8zM2 9.2h1.6v1.5H2zM4.9 9.2h1.6v1.5H4.9zM2 12.3h1.6v1.5H2zM4.9 12.3h1.6v1.5H4.9zM7.9 9.2h1.5v4.6H7.9z"/></svg><div class="t" style="top:202.84px;font-size:12px;color:#000;line-height:normal;white-space:nowrap;letter-spacing:-0.572px;left:63.19999999999999px;">1...</div><svg style="left:93px;top:202px" width="12" height="14"><path d="M2.7 6.5 V3.7 a2.9 2.9 0 0 1 5.8 0 V6.5" fill="none" stroke="#3dbc78" stroke-width="1.3"/><rect x="0" y="5.8" width="11.2" height="7.2" fill="#3dbc78"/></svg><svg style="left:137px;top:200px" width="16" height="18"><g fill="none" stroke="#1e9fe5" stroke-width="1.1"><rect x="0.55" y="2.35" width="10.9" height="13.1"/><path d="M3.5 2.4V4.4H8.5V2.4M4.6 2.2Q6 -0.2 7.4 2.2"/><circle cx="4.3" cy="11.6" r="1.7" fill="#cfeaf9" stroke-width="1"/></g><rect x="8.1" y="7.75" width="6.4" height="8.7" fill="#fff" stroke="#1e9fe5" stroke-width="1.15"/><path fill="#1e9fe5" d="M2.2 6.3h1v1.8h-1zM4 6.9h2.6v1H4zM9.8 10h3v1h-3zM9.8 11.9h1v1h-1zM11.9 11.9h1v1h-1zM9.8 13.9h1v1h-1zM11.9 13.9h1v1h-1zM4.3 11.6V9.9A1.7 1.7 0 0 1 6 11.6Z"/></svg><div class="t" style="top:202.84px;font-size:12px;color:#000;line-height:normal;white-space:nowrap;letter-spacing:-0.048px;left:182.5px;">N..</div><div class="t" style="top:202.84px;font-size:12px;color:#000;line-height:normal;white-space:nowrap;letter-spacing:-0.147px;left:210.5px;">o...</div><div class="t" style="top:202.84px;font-size:12px;color:#000;line-height:normal;white-space:nowrap;letter-spacing:-0.006px;left:-64.71px;width:400px;text-align:right;">20.05.2021</div><div class="t" style="top:202.84px;font-size:12px;color:#000;line-height:normal;white-space:nowrap;left:53.20px;width:400px;text-align:right;">7 200,00</div><div class="t" style="top:202.84px;font-size:12px;color:#000;line-height:normal;white-space:nowrap;left:169.50px;width:400px;text-align:right;">0,00</div><div class="t" style="top:202.84px;font-size:12px;color:#000;line-height:normal;white-space:nowrap;left:263.20px;width:400px;text-align:right;">7 200,00</div><div class="t" style="top:202.84px;font-size:12px;color:#000;line-height:normal;white-space:nowrap;letter-spacing:-0.258px;left:675.5px;">Kč</div><div style="left:722px;top:200px;width:18px;height:17px;background:#3ec47b;border:1px solid #6c7a72;"></div><svg style="left:758px;top:201px" width="12" height="16"><rect x="0.1" y="0" width="11.1" height="15.4" rx="0.8" fill="#4fc788"/><path fill="#fff" d="M1.9 1.7h7.6v2.3H1.9zM2 6h1.6v1.5H2zM4.9 6h1.6v1.5H4.9zM7.8 6h1.6v1.5H7.8zM2 9.2h1.6v1.5H2zM4.9 9.2h1.6v1.5H4.9zM2 12.3h1.6v1.5H2zM4.9 12.3h1.6v1.5H4.9zM7.9 9.2h1.5v4.6H7.9z"/></svg><div class="t" style="top:202.84px;font-size:12px;color:#000;line-height:normal;white-space:nowrap;left:466.00px;width:400px;text-align:right;">7 200,00</div><div class="t" style="top:224.84px;font-size:12px;color:#000;line-height:normal;white-space:nowrap;letter-spacing:-0.572px;left:63.19999999999999px;">1...</div><svg style="left:93px;top:224px" width="12" height="14"><path d="M2.7 6.5 V3.7 a2.9 2.9 0 0 1 5.8 0 V6.5" fill="none" stroke="#3dbc78" stroke-width="1.3"/><rect x="0" y="5.8" width="11.2" height="7.2" fill="#3dbc78"/></svg><svg style="left:137px;top:222px" width="16" height="18"><g fill="none" stroke="#1e9fe5" stroke-width="1.1"><rect x="0.55" y="2.35" width="10.9" height="13.1"/><path d="M3.5 2.4V4.4H8.5V2.4M4.6 2.2Q6 -0.2 7.4 2.2"/><circle cx="4.3" cy="11.6" r="1.7" fill="#cfeaf9" stroke-width="1"/></g><rect x="8.1" y="7.75" width="6.4" height="8.7" fill="#fff" stroke="#1e9fe5" stroke-width="1.15"/><path fill="#1e9fe5" d="M2.2 6.3h1v1.8h-1zM4 6.9h2.6v1H4zM9.8 10h3v1h-3zM9.8 11.9h1v1h-1zM11.9 11.9h1v1h-1zM9.8 13.9h1v1h-1zM11.9 13.9h1v1h-1zM4.3 11.6V9.9A1.7 1.7 0 0 1 6 11.6Z"/></svg><div class="t" style="top:224.84px;font-size:12px;color:#000;line-height:normal;white-space:nowrap;letter-spacing:-0.672px;left:182.5px;">L...</div><div class="t" style="top:224.84px;font-size:12px;color:#000;line-height:normal;white-space:nowrap;letter-spacing:-0.442px;left:210.5px;">P...</div><div class="t" style="top:224.84px;font-size:12px;color:#000;line-height:normal;white-space:nowrap;letter-spacing:-0.006px;left:-64.71px;width:400px;text-align:right;">01.06.2021</div><div class="t" style="top:224.84px;font-size:12px;color:#000;line-height:normal;white-space:nowrap;left:53.20px;width:400px;text-align:right;">12 000,00</div><div class="t" style="top:224.84px;font-size:12px;color:#000;line-height:normal;white-space:nowrap;left:169.50px;width:400px;text-align:right;">0,00</div><div class="t" style="top:224.84px;font-size:12px;color:#000;line-height:normal;white-space:nowrap;left:263.20px;width:400px;text-align:right;">12 000,00</div><div class="t" style="top:224.84px;font-size:12px;color:#000;line-height:normal;white-space:nowrap;letter-spacing:-0.258px;left:675.5px;">Kč</div><div style="left:722px;top:222px;width:18px;height:17px;background:#3ec47b;border:1px solid #6c7a72;"></div><svg style="left:758px;top:223px" width="12" height="16"><rect x="0.1" y="0" width="11.1" height="15.4" rx="0.8" fill="#4fc788"/><path fill="#fff" d="M1.9 1.7h7.6v2.3H1.9zM2 6h1.6v1.5H2zM4.9 6h1.6v1.5H4.9zM7.8 6h1.6v1.5H7.8zM2 9.2h1.6v1.5H2zM4.9 9.2h1.6v1.5H4.9zM2 12.3h1.6v1.5H2zM4.9 12.3h1.6v1.5H4.9zM7.9 9.2h1.5v4.6H7.9z"/></svg><div class="t" style="top:224.84px;font-size:12px;color:#000;line-height:normal;white-space:nowrap;left:466.00px;width:400px;text-align:right;">12 000,00</div><div class="t" style="top:246.84px;font-size:12px;color:#000;line-height:normal;white-space:nowrap;letter-spacing:-0.572px;left:35.2px;">1...</div><div class="t" style="top:246.84px;font-size:12px;color:#000;line-height:normal;white-space:nowrap;letter-spacing:-0.572px;left:63.19999999999999px;">1...</div><svg style="left:93px;top:246px" width="12" height="14"><path d="M2.7 6.5 V3.7 a2.9 2.9 0 0 1 5.8 0 V6.5" fill="none" stroke="#3dbc78" stroke-width="1.3"/><rect x="0" y="5.8" width="11.2" height="7.2" fill="#3dbc78"/></svg><svg style="left:137px;top:244px" width="16" height="18"><g fill="none" stroke="#1e9fe5" stroke-width="1.1"><rect x="0.55" y="2.35" width="10.9" height="13.1"/><path d="M3.5 2.4V4.4H8.5V2.4M4.6 2.2Q6 -0.2 7.4 2.2"/><circle cx="4.3" cy="11.6" r="1.7" fill="#cfeaf9" stroke-width="1"/></g><rect x="8.1" y="7.75" width="6.4" height="8.7" fill="#fff" stroke="#1e9fe5" stroke-width="1.15"/><path fill="#1e9fe5" d="M2.2 6.3h1v1.8h-1zM4 6.9h2.6v1H4zM9.8 10h3v1h-3zM9.8 11.9h1v1h-1zM11.9 11.9h1v1h-1zM9.8 13.9h1v1h-1zM11.9 13.9h1v1h-1zM4.3 11.6V9.9A1.7 1.7 0 0 1 6 11.6Z"/></svg><div class="t" style="top:246.84px;font-size:12px;color:#000;line-height:normal;white-space:nowrap;letter-spacing:-0.317px;left:182.5px;">P...</div><div class="t" style="top:246.84px;font-size:12px;color:#000;line-height:normal;white-space:nowrap;letter-spacing:-0.006px;left:-64.71px;width:400px;text-align:right;">03.06.2021</div><div class="t" style="top:246.84px;font-size:12px;color:#000;line-height:normal;white-space:nowrap;left:53.20px;width:400px;text-align:right;">100,00</div><div class="t" style="top:246.84px;font-size:12px;color:#000;line-height:normal;white-space:nowrap;left:169.50px;width:400px;text-align:right;">100,00</div><div class="t" style="top:246.84px;font-size:12px;color:#000;line-height:normal;white-space:nowrap;left:263.20px;width:400px;text-align:right;">0,00</div><div class="t" style="top:246.84px;font-size:12px;color:#000;line-height:normal;white-space:nowrap;letter-spacing:-0.258px;left:675.5px;">Kč</div><div style="left:722px;top:244px;width:18px;height:17px;background:#3ec47b;border:1px solid #6c7a72;"></div><div class="t" style="top:268.84px;font-size:12px;color:#000;line-height:normal;white-space:nowrap;letter-spacing:-0.572px;left:35.2px;">1...</div><div class="t" style="top:268.84px;font-size:12px;color:#000;line-height:normal;white-space:nowrap;letter-spacing:-0.572px;left:63.19999999999999px;">1...</div><svg style="left:93px;top:268px" width="12" height="14"><path d="M2.7 6.5 V3.7 a2.9 2.9 0 0 1 5.8 0 V6.5" fill="none" stroke="#3dbc78" stroke-width="1.3"/><rect x="0" y="5.8" width="11.2" height="7.2" fill="#3dbc78"/></svg><svg style="left:137px;top:266px" width="16" height="18"><g fill="none" stroke="#1e9fe5" stroke-width="1.1"><rect x="0.55" y="2.35" width="10.9" height="13.1"/><path d="M3.5 2.4V4.4H8.5V2.4M4.6 2.2Q6 -0.2 7.4 2.2"/><circle cx="4.3" cy="11.6" r="1.7" fill="#cfeaf9" stroke-width="1"/></g><rect x="8.1" y="7.75" width="6.4" height="8.7" fill="#fff" stroke="#1e9fe5" stroke-width="1.15"/><path fill="#1e9fe5" d="M2.2 6.3h1v1.8h-1zM4 6.9h2.6v1H4zM9.8 10h3v1h-3zM9.8 11.9h1v1h-1zM11.9 11.9h1v1h-1zM9.8 13.9h1v1h-1zM11.9 13.9h1v1h-1zM4.3 11.6V9.9A1.7 1.7 0 0 1 6 11.6Z"/></svg><div class="t" style="top:268.84px;font-size:12px;color:#000;line-height:normal;white-space:nowrap;letter-spacing:-0.679px;left:182.5px;">B...</div><div class="t" style="top:268.84px;font-size:12px;color:#000;line-height:normal;white-space:nowrap;letter-spacing:-0.572px;left:210.5px;">1...</div><div class="t" style="top:268.84px;font-size:12px;color:#000;line-height:normal;white-space:nowrap;letter-spacing:-0.006px;left:-64.71px;width:400px;text-align:right;">10.06.2021</div><div class="t" style="top:268.84px;font-size:12px;color:#000;line-height:normal;white-space:nowrap;left:53.20px;width:400px;text-align:right;">100,00</div><div class="t" style="top:268.84px;font-size:12px;color:#000;line-height:normal;white-space:nowrap;left:169.50px;width:400px;text-align:right;">100,00</div><div class="t" style="top:268.84px;font-size:12px;color:#000;line-height:normal;white-space:nowrap;left:263.20px;width:400px;text-align:right;">0,00</div><div class="t" style="top:268.84px;font-size:12px;color:#000;line-height:normal;white-space:nowrap;letter-spacing:-0.258px;left:675.5px;">Kč</div><div style="left:722px;top:266px;width:18px;height:17px;background:#3ec47b;border:1px solid #6c7a72;"></div><div class="t" style="top:290.84px;font-size:12px;color:#000;line-height:normal;white-space:nowrap;letter-spacing:-0.572px;left:35.2px;">1...</div><div class="t" style="top:290.84px;font-size:12px;color:#000;line-height:normal;white-space:nowrap;letter-spacing:-0.572px;left:63.19999999999999px;">1...</div><svg style="left:93px;top:290px" width="12" height="14"><path d="M2.7 6.5 V3.7 a2.9 2.9 0 0 1 5.8 0 V6.5" fill="none" stroke="#3dbc78" stroke-width="1.3"/><rect x="0" y="5.8" width="11.2" height="7.2" fill="#3dbc78"/></svg><svg style="left:137px;top:288px" width="16" height="18"><g fill="none" stroke="#1e9fe5" stroke-width="1.1"><rect x="0.55" y="2.35" width="10.9" height="13.1"/><path d="M3.5 2.4V4.4H8.5V2.4M4.6 2.2Q6 -0.2 7.4 2.2"/><circle cx="4.3" cy="11.6" r="1.7" fill="#cfeaf9" stroke-width="1"/></g><rect x="8.1" y="7.75" width="6.4" height="8.7" fill="#fff" stroke="#1e9fe5" stroke-width="1.15"/><path fill="#1e9fe5" d="M2.2 6.3h1v1.8h-1zM4 6.9h2.6v1H4zM9.8 10h3v1h-3zM9.8 11.9h1v1h-1zM11.9 11.9h1v1h-1zM9.8 13.9h1v1h-1zM11.9 13.9h1v1h-1zM4.3 11.6V9.9A1.7 1.7 0 0 1 6 11.6Z"/></svg><div class="t" style="top:290.84px;font-size:12px;color:#000;line-height:normal;white-space:nowrap;letter-spacing:-0.679px;left:182.5px;">B...</div><div class="t" style="top:290.84px;font-size:12px;color:#000;line-height:normal;white-space:nowrap;letter-spacing:0.083px;left:-64.62px;width:400px;text-align:right;">11.06.2021</div><div class="t" style="top:290.84px;font-size:12px;color:#000;line-height:normal;white-space:nowrap;left:53.20px;width:400px;text-align:right;">100,00</div><div class="t" style="top:290.84px;font-size:12px;color:#000;line-height:normal;white-space:nowrap;left:169.50px;width:400px;text-align:right;">100,00</div><div class="t" style="top:290.84px;font-size:12px;color:#000;line-height:normal;white-space:nowrap;left:263.20px;width:400px;text-align:right;">0,00</div><div class="t" style="top:290.84px;font-size:12px;color:#000;line-height:normal;white-space:nowrap;letter-spacing:-0.258px;left:675.5px;">Kč</div><div style="left:722px;top:288px;width:18px;height:17px;background:#3ec47b;border:1px solid #6c7a72;"></div><div class="t" style="top:312.84px;font-size:12px;color:#000;line-height:normal;white-space:nowrap;letter-spacing:-0.572px;left:35.2px;">1...</div><div class="t" style="top:312.84px;font-size:12px;color:#000;line-height:normal;white-space:nowrap;letter-spacing:-0.572px;left:63.19999999999999px;">1...</div><svg style="left:93px;top:312px" width="12" height="14"><path d="M2.7 6.5 V3.7 a2.9 2.9 0 0 1 5.8 0 V6.5" fill="none" stroke="#3dbc78" stroke-width="1.3"/><rect x="0" y="5.8" width="11.2" height="7.2" fill="#3dbc78"/></svg><svg style="left:137px;top:310px" width="16" height="18"><g fill="none" stroke="#1e9fe5" stroke-width="1.1"><rect x="0.55" y="2.35" width="10.9" height="13.1"/><path d="M3.5 2.4V4.4H8.5V2.4M4.6 2.2Q6 -0.2 7.4 2.2"/><circle cx="4.3" cy="11.6" r="1.7" fill="#cfeaf9" stroke-width="1"/></g><rect x="8.1" y="7.75" width="6.4" height="8.7" fill="#fff" stroke="#1e9fe5" stroke-width="1.15"/><path fill="#1e9fe5" d="M2.2 6.3h1v1.8h-1zM4 6.9h2.6v1H4zM9.8 10h3v1h-3zM9.8 11.9h1v1h-1zM11.9 11.9h1v1h-1zM9.8 13.9h1v1h-1zM11.9 13.9h1v1h-1zM4.3 11.6V9.9A1.7 1.7 0 0 1 6 11.6Z"/></svg><div class="t" style="top:312.84px;font-size:12px;color:#000;line-height:normal;white-space:nowrap;letter-spacing:-0.679px;left:182.5px;">B...</div><div class="t" style="top:312.84px;font-size:12px;color:#000;line-height:normal;white-space:nowrap;letter-spacing:-0.006px;left:-64.71px;width:400px;text-align:right;">12.06.2021</div><div class="t" style="top:312.84px;font-size:12px;color:#000;line-height:normal;white-space:nowrap;left:53.20px;width:400px;text-align:right;">100,00</div><div class="t" style="top:312.84px;font-size:12px;color:#000;line-height:normal;white-space:nowrap;left:169.50px;width:400px;text-align:right;">100,00</div><div class="t" style="top:312.84px;font-size:12px;color:#000;line-height:normal;white-space:nowrap;left:263.20px;width:400px;text-align:right;">0,00</div><div class="t" style="top:312.84px;font-size:12px;color:#000;line-height:normal;white-space:nowrap;letter-spacing:-0.258px;left:675.5px;">Kč</div><div style="left:722px;top:310px;width:18px;height:17px;background:#3ec47b;border:1px solid #6c7a72;"></div><div class="t" style="top:334.84px;font-size:12px;color:#000;line-height:normal;white-space:nowrap;letter-spacing:-0.572px;left:35.2px;">1...</div><div class="t" style="top:334.84px;font-size:12px;color:#000;line-height:normal;white-space:nowrap;letter-spacing:-0.572px;left:63.19999999999999px;">1...</div><svg style="left:93px;top:334px" width="12" height="14"><path d="M2.7 6.5 V3.7 a2.9 2.9 0 0 1 5.8 0 V6.5" fill="none" stroke="#3dbc78" stroke-width="1.3"/><rect x="0" y="5.8" width="11.2" height="7.2" fill="#3dbc78"/></svg><svg style="left:137px;top:332px" width="16" height="18"><g fill="none" stroke="#1e9fe5" stroke-width="1.1"><rect x="0.55" y="2.35" width="10.9" height="13.1"/><path d="M3.5 2.4V4.4H8.5V2.4M4.6 2.2Q6 -0.2 7.4 2.2"/><circle cx="4.3" cy="11.6" r="1.7" fill="#cfeaf9" stroke-width="1"/></g><rect x="8.1" y="7.75" width="6.4" height="8.7" fill="#fff" stroke="#1e9fe5" stroke-width="1.15"/><path fill="#1e9fe5" d="M2.2 6.3h1v1.8h-1zM4 6.9h2.6v1H4zM9.8 10h3v1h-3zM9.8 11.9h1v1h-1zM11.9 11.9h1v1h-1zM9.8 13.9h1v1h-1zM11.9 13.9h1v1h-1zM4.3 11.6V9.9A1.7 1.7 0 0 1 6 11.6Z"/></svg><div class="t" style="top:334.84px;font-size:12px;color:#000;line-height:normal;white-space:nowrap;letter-spacing:-0.679px;left:182.5px;">B...</div><div class="t" style="top:334.84px;font-size:12px;color:#000;line-height:normal;white-space:nowrap;letter-spacing:-0.186px;left:210.5px;">t...</div><div class="t" style="top:334.84px;font-size:12px;color:#000;line-height:normal;white-space:nowrap;letter-spacing:-0.006px;left:-64.71px;width:400px;text-align:right;">13.06.2021</div><div class="t" style="top:334.84px;font-size:12px;color:#000;line-height:normal;white-space:nowrap;left:53.20px;width:400px;text-align:right;">100,00</div><div class="t" style="top:334.84px;font-size:12px;color:#000;line-height:normal;white-space:nowrap;left:169.50px;width:400px;text-align:right;">100,00</div><div class="t" style="top:334.84px;font-size:12px;color:#000;line-height:normal;white-space:nowrap;left:263.20px;width:400px;text-align:right;">0,00</div><div class="t" style="top:334.84px;font-size:12px;color:#000;line-height:normal;white-space:nowrap;letter-spacing:-0.258px;left:675.5px;">Kč</div><div style="left:722px;top:332px;width:18px;height:17px;background:#3ec47b;border:1px solid #6c7a72;"></div><div class="t" style="top:356.84px;font-size:12px;color:#000;line-height:normal;white-space:nowrap;letter-spacing:-0.572px;left:35.2px;">1...</div><div class="t" style="top:356.84px;font-size:12px;color:#000;line-height:normal;white-space:nowrap;letter-spacing:-0.572px;left:63.19999999999999px;">1...</div><svg style="left:93px;top:356px" width="12" height="14"><path d="M2.7 6.5 V3.7 a2.9 2.9 0 0 1 5.8 0 V6.5" fill="none" stroke="#3dbc78" stroke-width="1.3"/><rect x="0" y="5.8" width="11.2" height="7.2" fill="#3dbc78"/></svg><svg style="left:137px;top:354px" width="16" height="18"><g fill="none" stroke="#1e9fe5" stroke-width="1.1"><rect x="0.55" y="2.35" width="10.9" height="13.1"/><path d="M3.5 2.4V4.4H8.5V2.4M4.6 2.2Q6 -0.2 7.4 2.2"/><circle cx="4.3" cy="11.6" r="1.7" fill="#cfeaf9" stroke-width="1"/></g><rect x="8.1" y="7.75" width="6.4" height="8.7" fill="#fff" stroke="#1e9fe5" stroke-width="1.15"/><path fill="#1e9fe5" d="M2.2 6.3h1v1.8h-1zM4 6.9h2.6v1H4zM9.8 10h3v1h-3zM9.8 11.9h1v1h-1zM11.9 11.9h1v1h-1zM9.8 13.9h1v1h-1zM11.9 13.9h1v1h-1zM4.3 11.6V9.9A1.7 1.7 0 0 1 6 11.6Z"/></svg><div class="t" style="top:356.84px;font-size:12px;color:#000;line-height:normal;white-space:nowrap;letter-spacing:-0.679px;left:182.5px;">B...</div><div class="t" style="top:356.84px;font-size:12px;color:#000;line-height:normal;white-space:nowrap;letter-spacing:-0.186px;left:210.5px;">t...</div><div class="t" style="top:356.84px;font-size:12px;color:#000;line-height:normal;white-space:nowrap;letter-spacing:-0.006px;left:-64.71px;width:400px;text-align:right;">14.06.2021</div><div class="t" style="top:356.84px;font-size:12px;color:#000;line-height:normal;white-space:nowrap;left:53.20px;width:400px;text-align:right;">100,00</div><div class="t" style="top:356.84px;font-size:12px;color:#000;line-height:normal;white-space:nowrap;left:169.50px;width:400px;text-align:right;">100,00</div><div class="t" style="top:356.84px;font-size:12px;color:#000;line-height:normal;white-space:nowrap;left:263.20px;width:400px;text-align:right;">0,00</div><div class="t" style="top:356.84px;font-size:12px;color:#000;line-height:normal;white-space:nowrap;letter-spacing:-0.258px;left:675.5px;">Kč</div><div style="left:722px;top:354px;width:18px;height:17px;background:#3ec47b;border:1px solid #6c7a72;"></div><div class="t" style="top:378.84px;font-size:12px;color:#000;line-height:normal;white-space:nowrap;letter-spacing:-0.572px;left:35.2px;">1...</div><div class="t" style="top:378.84px;font-size:12px;color:#000;line-height:normal;white-space:nowrap;letter-spacing:-0.572px;left:63.19999999999999px;">1...</div><svg style="left:93px;top:378px" width="12" height="14"><path d="M2.7 6.5 V3.7 a2.9 2.9 0 0 1 5.8 0 V6.5" fill="none" stroke="#3dbc78" stroke-width="1.3"/><rect x="0" y="5.8" width="11.2" height="7.2" fill="#3dbc78"/></svg><svg style="left:137px;top:376px" width="16" height="18"><g fill="none" stroke="#1e9fe5" stroke-width="1.1"><rect x="0.55" y="2.35" width="10.9" height="13.1"/><path d="M3.5 2.4V4.4H8.5V2.4M4.6 2.2Q6 -0.2 7.4 2.2"/><circle cx="4.3" cy="11.6" r="1.7" fill="#cfeaf9" stroke-width="1"/></g><rect x="8.1" y="7.75" width="6.4" height="8.7" fill="#fff" stroke="#1e9fe5" stroke-width="1.15"/><path fill="#1e9fe5" d="M2.2 6.3h1v1.8h-1zM4 6.9h2.6v1H4zM9.8 10h3v1h-3zM9.8 11.9h1v1h-1zM11.9 11.9h1v1h-1zM9.8 13.9h1v1h-1zM11.9 13.9h1v1h-1zM4.3 11.6V9.9A1.7 1.7 0 0 1 6 11.6Z"/></svg><div class="t" style="top:378.84px;font-size:12px;color:#000;line-height:normal;white-space:nowrap;letter-spacing:-0.679px;left:182.5px;">B...</div><div class="t" style="top:378.84px;font-size:12px;color:#000;line-height:normal;white-space:nowrap;letter-spacing:-0.186px;left:210.5px;">t...</div><div class="t" style="top:378.84px;font-size:12px;color:#000;line-height:normal;white-space:nowrap;letter-spacing:-0.006px;left:-64.71px;width:400px;text-align:right;">15.06.2021</div><div class="t" style="top:378.84px;font-size:12px;color:#000;line-height:normal;white-space:nowrap;left:53.20px;width:400px;text-align:right;">100,00</div><div class="t" style="top:378.84px;font-size:12px;color:#000;line-height:normal;white-space:nowrap;left:169.50px;width:400px;text-align:right;">100,00</div><div class="t" style="top:378.84px;font-size:12px;color:#000;line-height:normal;white-space:nowrap;left:263.20px;width:400px;text-align:right;">0,00</div><div class="t" style="top:378.84px;font-size:12px;color:#000;line-height:normal;white-space:nowrap;letter-spacing:-0.258px;left:675.5px;">Kč</div><div style="left:722px;top:376px;width:18px;height:17px;background:#3ec47b;border:1px solid #6c7a72;"></div><div class="t" style="top:400.84px;font-size:12px;color:#000;line-height:normal;white-space:nowrap;letter-spacing:-0.572px;left:63.19999999999999px;">1...</div><div class="t" style="top:400.84px;font-size:12px;color:#000;line-height:normal;white-space:nowrap;letter-spacing:-0.672px;left:182.5px;">L...</div><div class="t" style="top:400.84px;font-size:12px;color:#000;line-height:normal;white-space:nowrap;letter-spacing:-0.442px;left:210.5px;">P...</div><div class="t" style="top:400.84px;font-size:12px;color:#000;line-height:normal;white-space:nowrap;letter-spacing:-0.006px;left:-64.71px;width:400px;text-align:right;">01.07.2021</div><div class="t" style="top:400.84px;font-size:12px;color:#000;line-height:normal;white-space:nowrap;left:53.20px;width:400px;text-align:right;">100,00</div><div class="t" style="top:400.84px;font-size:12px;color:#000;line-height:normal;white-space:nowrap;left:169.50px;width:400px;text-align:right;">100,00</div><div class="t" style="top:400.84px;font-size:12px;color:#000;line-height:normal;white-space:nowrap;left:263.20px;width:400px;text-align:right;">0,00</div><div class="t" style="top:400.84px;font-size:12px;color:#000;line-height:normal;white-space:nowrap;letter-spacing:-0.258px;left:675.5px;">Kč</div><div style="left:722px;top:398px;width:18px;height:17px;background:#fff;border:1px solid #8c8c8c;"><div style="left:8px;top:2px;width:8px;height:10px;background:#3dbc78"></div><div style="left:0;top:12px;width:8px;height:3px;background:#f06060"></div><div style="left:8px;top:12px;width:8px;height:3px;background:#3dbc78"></div></div><div class="t" style="top:422.84px;font-size:12px;color:#000;line-height:normal;white-space:nowrap;letter-spacing:-0.572px;left:35.2px;">1...</div><div class="t" style="top:422.84px;font-size:12px;color:#000;line-height:normal;white-space:nowrap;letter-spacing:-0.572px;left:63.19999999999999px;">1...</div><svg style="left:93px;top:422px" width="12" height="14"><path d="M2.7 6.5 V3.7 a2.9 2.9 0 0 1 5.8 0 V6.5" fill="none" stroke="#3dbc78" stroke-width="1.3"/><rect x="0" y="5.8" width="11.2" height="7.2" fill="#3dbc78"/></svg><svg style="left:137px;top:420px" width="16" height="18"><g fill="none" stroke="#1e9fe5" stroke-width="1.1"><rect x="0.55" y="2.35" width="10.9" height="13.1"/><path d="M3.5 2.4V4.4H8.5V2.4M4.6 2.2Q6 -0.2 7.4 2.2"/><circle cx="4.3" cy="11.6" r="1.7" fill="#cfeaf9" stroke-width="1"/></g><rect x="8.1" y="7.75" width="6.4" height="8.7" fill="#fff" stroke="#1e9fe5" stroke-width="1.15"/><path fill="#1e9fe5" d="M2.2 6.3h1v1.8h-1zM4 6.9h2.6v1H4zM9.8 10h3v1h-3zM9.8 11.9h1v1h-1zM11.9 11.9h1v1h-1zM9.8 13.9h1v1h-1zM11.9 13.9h1v1h-1zM4.3 11.6V9.9A1.7 1.7 0 0 1 6 11.6Z"/></svg><div class="t" style="top:422.84px;font-size:12px;color:#000;line-height:normal;white-space:nowrap;letter-spacing:-0.317px;left:182.5px;">P...</div><div class="t" style="top:422.84px;font-size:12px;color:#000;line-height:normal;white-space:nowrap;letter-spacing:-0.442px;left:210.5px;">P...</div><div class="t" style="top:422.84px;font-size:12px;color:#000;line-height:normal;white-space:nowrap;letter-spacing:-0.006px;left:-64.71px;width:400px;text-align:right;">20.08.2021</div><div class="t" style="top:422.84px;font-size:12px;color:#000;line-height:normal;white-space:nowrap;left:53.20px;width:400px;text-align:right;">100,00</div><div class="t" style="top:422.84px;font-size:12px;color:#000;line-height:normal;white-space:nowrap;left:169.50px;width:400px;text-align:right;">100,00</div><div class="t" style="top:422.84px;font-size:12px;color:#000;line-height:normal;white-space:nowrap;left:263.20px;width:400px;text-align:right;">0,00</div><div class="t" style="top:422.84px;font-size:12px;color:#000;line-height:normal;white-space:nowrap;letter-spacing:-0.258px;left:675.5px;">Kč</div><div style="left:722px;top:420px;width:18px;height:17px;background:#3ec47b;border:1px solid #6c7a72;"></div><div class="t" style="top:444.84px;font-size:12px;color:#000;line-height:normal;white-space:nowrap;letter-spacing:-0.572px;left:35.2px;">1...</div><div class="t" style="top:444.84px;font-size:12px;color:#000;line-height:normal;white-space:nowrap;letter-spacing:-0.572px;left:63.19999999999999px;">1...</div><svg style="left:93px;top:444px" width="12" height="14"><path d="M2.7 6.5 V3.7 a2.9 2.9 0 0 1 5.8 0 V6.5" fill="none" stroke="#3dbc78" stroke-width="1.3"/><rect x="0" y="5.8" width="11.2" height="7.2" fill="#3dbc78"/></svg><svg style="left:137px;top:442px" width="16" height="18"><g fill="none" stroke="#1e9fe5" stroke-width="1.1"><rect x="0.55" y="2.35" width="10.9" height="13.1"/><path d="M3.5 2.4V4.4H8.5V2.4M4.6 2.2Q6 -0.2 7.4 2.2"/><circle cx="4.3" cy="11.6" r="1.7" fill="#cfeaf9" stroke-width="1"/></g><rect x="8.1" y="7.75" width="6.4" height="8.7" fill="#fff" stroke="#1e9fe5" stroke-width="1.15"/><path fill="#1e9fe5" d="M2.2 6.3h1v1.8h-1zM4 6.9h2.6v1H4zM9.8 10h3v1h-3zM9.8 11.9h1v1h-1zM11.9 11.9h1v1h-1zM9.8 13.9h1v1h-1zM11.9 13.9h1v1h-1zM4.3 11.6V9.9A1.7 1.7 0 0 1 6 11.6Z"/></svg><div class="t" style="top:444.84px;font-size:12px;color:#000;line-height:normal;white-space:nowrap;letter-spacing:-0.317px;left:182.5px;">P...</div><div class="t" style="top:444.84px;font-size:12px;color:#000;line-height:normal;white-space:nowrap;letter-spacing:-0.006px;left:-64.71px;width:400px;text-align:right;">02.09.2021</div><div class="t" style="top:444.84px;font-size:12px;color:#000;line-height:normal;white-space:nowrap;left:53.20px;width:400px;text-align:right;">323,30</div><div class="t" style="top:444.84px;font-size:12px;color:#000;line-height:normal;white-space:nowrap;left:169.50px;width:400px;text-align:right;">323,30</div><div class="t" style="top:444.84px;font-size:12px;color:#000;line-height:normal;white-space:nowrap;left:263.20px;width:400px;text-align:right;">0,00</div><div class="t" style="top:444.84px;font-size:12px;color:#000;line-height:normal;white-space:nowrap;letter-spacing:-0.258px;left:675.5px;">Kč</div><div style="left:722px;top:442px;width:18px;height:17px;background:#3ec47b;border:1px solid #6c7a72;"></div><svg style="left:7.599999999999994px;top:465.9px" width="14" height="14" viewBox="0 0 14 14"><path d="M7 0.2V13.6M1.2 3.5L12.8 10.3M12.8 3.5L1.2 10.3" stroke="#ffa533" stroke-width="2.9" fill="none"/></svg><div class="t" style="top:466.84px;font-size:12px;color:#000;line-height:normal;white-space:nowrap;letter-spacing:-0.572px;left:35.2px;">1...</div><div class="t" style="top:466.84px;font-size:12px;color:#000;line-height:normal;white-space:nowrap;letter-spacing:-0.572px;left:63.19999999999999px;">1...</div><svg style="left:93px;top:466px" width="12" height="14"><path d="M2.7 6.5 V3.7 a2.9 2.9 0 0 1 5.8 0 V6.5" fill="none" stroke="#3dbc78" stroke-width="1.3"/><rect x="0" y="5.8" width="11.2" height="7.2" fill="#3dbc78"/></svg><div class="t" style="top:466.84px;font-size:12px;color:#000;line-height:normal;white-space:nowrap;letter-spacing:-0.317px;left:182.5px;">P...</div><div class="t" style="top:466.84px;font-size:12px;color:#000;line-height:normal;white-space:nowrap;letter-spacing:-0.006px;left:-64.71px;width:400px;text-align:right;">02.09.2021</div><div class="t" style="top:466.84px;font-size:12px;color:#000;line-height:normal;white-space:nowrap;left:53.20px;width:400px;text-align:right;">-323,30</div><div class="t" style="top:466.84px;font-size:12px;color:#000;line-height:normal;white-space:nowrap;left:169.50px;width:400px;text-align:right;">0,00</div><div class="t" style="top:466.84px;font-size:12px;color:#000;line-height:normal;white-space:nowrap;left:263.20px;width:400px;text-align:right;">0,00</div><div class="t" style="top:466.84px;font-size:12px;color:#000;line-height:normal;white-space:nowrap;letter-spacing:-0.258px;left:675.5px;">Kč</div><div style="left:722px;top:464px;width:18px;height:17px;background:#c4c4c4;border:1px solid #8c8c8c;"></div><svg style="left:7.599999999999994px;top:487.9px" width="14" height="14" viewBox="0 0 14 14"><path d="M7 0.2V13.6M1.2 3.5L12.8 10.3M12.8 3.5L1.2 10.3" stroke="#ffa533" stroke-width="2.9" fill="none"/></svg><div class="t" style="top:488.84px;font-size:12px;color:#000;line-height:normal;white-space:nowrap;letter-spacing:-0.572px;left:35.2px;">1...</div><div class="t" style="top:488.84px;font-size:12px;color:#000;line-height:normal;white-space:nowrap;letter-spacing:-0.572px;left:63.19999999999999px;">1...</div><svg style="left:93px;top:488px" width="12" height="14"><path d="M2.7 6.5 V3.7 a2.9 2.9 0 0 1 5.8 0 V6.5" fill="none" stroke="#3dbc78" stroke-width="1.3"/><rect x="0" y="5.8" width="11.2" height="7.2" fill="#3dbc78"/></svg><div class="t" style="top:488.84px;font-size:12px;color:#000;line-height:normal;white-space:nowrap;letter-spacing:-0.317px;left:182.5px;">P...</div><div class="t" style="top:488.84px;font-size:12px;color:#000;line-height:normal;white-space:nowrap;letter-spacing:-0.006px;left:-64.71px;width:400px;text-align:right;">02.09.2021</div><div class="t" style="top:488.84px;font-size:12px;color:#000;line-height:normal;white-space:nowrap;left:53.20px;width:400px;text-align:right;">323,30</div><div class="t" style="top:488.84px;font-size:12px;color:#000;line-height:normal;white-space:nowrap;left:169.50px;width:400px;text-align:right;">0,00</div><div class="t" style="top:488.84px;font-size:12px;color:#000;line-height:normal;white-space:nowrap;left:263.20px;width:400px;text-align:right;">0,00</div><div class="t" style="top:488.84px;font-size:12px;color:#000;line-height:normal;white-space:nowrap;letter-spacing:-0.258px;left:675.5px;">Kč</div><div style="left:722px;top:486px;width:18px;height:17px;background:#c4c4c4;border:1px solid #8c8c8c;"></div></div><svg style="left:923.5px;top:203.3px" width="10" height="8" viewBox="0 0 10 8" ><path d="M1 6L4 2L7 6" fill="none" stroke="#484848" stroke-width="1.9"/></svg><div style="left:920px;top:453px;width:16px;height:17px;background:#cdcdcd;"></div><div style="left:80px;top:709px;width:857px;height:16px;background:#f0f0f0;"></div><div style="left:98px;top:709px;width:17px;height:15px;background:#cdcdcd;"></div><svg style="left:85px;top:712px" width="8" height="10" viewBox="0 0 8 10" ><path d="M6 1.4L1.9 4.6L6 7.8" fill="none" stroke="#484848" stroke-width="1.9"/></svg><svg style="left:907px;top:712px" width="8" height="10" viewBox="0 0 8 10" ><path d="M1.8 1.4L6 4.6L1.8 7.8" fill="none" stroke="#484848" stroke-width="1.9"/></svg><svg style="left:923px;top:714px" width="10" height="8" viewBox="0 0 10 8" ><path d="M1.6 1L4.6 5L7.6 1" fill="none" stroke="#484848" stroke-width="1.9"/></svg><div style="left:80px;top:725px;width:857px;height:27px;background:#f0f0f0;border:1px solid #c6c6c6;border-left-color:#d8d8d8;"></div><div style="left:936px;top:198px;width:1px;height:528px;background:#cfcfcf;"></div><div style="left:919px;top:198px;width:1px;height:527px;background:#fcfcfc;"></div><div style="left:81px;top:727px;width:23px;height:23px;background:#d2d2d2;border:2px solid #787878;"></div><svg style="left:84px;top:731px" width="18" height="15" viewBox="0 0 18 15" ><path d="M0.8 1.6 Q4.6 0.2 8.4 2 V13.2 Q4.6 11.6 0.8 13Z M8.4 2 Q12.2 0.2 16 1.6 V13 Q12.2 11.6 8.4 13.2" fill="none" stroke="#1555a8" stroke-width="1.3"/></svg><svg style="left:110px;top:732px" width="14" height="14" viewBox="0 0 14 14" ><path d="M0.7 2.6 Q0.7 0.8 2.6 0.8H10.6Q12.5 .8 12.5 2.6V4.2H0.7Z M1.2 4.2V12.2H12V4.2" fill="none" stroke="#1555a8" stroke-width="1.2"/><path d="M5 6.8H8.2" stroke="#1555a8" stroke-width="1.2"/></svg><svg style="left:134px;top:731px" width="18" height="18" viewBox="0 0 18 18" ><path d="M0.8 0.8H13.2L8.4 7V13.4L5.6 12V7Z" fill="none" stroke="#1555a8" stroke-width="1.3" stroke-linejoin="round"/><path d="M11.2 14.2H16.4L13.8 16.8Z" fill="#1555a8"/></svg><div style="left:153px;top:728px;width:1px;height:21px;background:#d0d0d0;"></div><svg style="left:158px;top:730px" width="18" height="18" viewBox="0 0 18 18" ><g transform="translate(8.6,8.7)" fill="none"><path d="M-0.00 -7.60L0.00 7.60M-6.58 -3.80L6.58 3.80M6.58 -3.80L-6.58 3.80" stroke="#1555a8" stroke-width="3.6"/><path d="M-0.00 -6.50L0.00 6.50M-5.63 -3.25L5.63 3.25M5.63 -3.25L-5.63 3.25" stroke="#f0f0f0" stroke-width="1.5"/></g></svg><div class="t" style="top:732.14px;font-size:12px;color:#1c479c;line-height:normal;white-space:nowrap;left:183.2px;">2</div><div style="left:197px;top:728px;width:1px;height:21px;background:#d0d0d0;"></div><div class="t" style="top:732.14px;font-size:12px;color:#1c479c;line-height:normal;white-space:nowrap;letter-spacing:-0.286px;left:204px;">Počet záznamů</div><div style="left:291px;top:728px;width:1px;height:21px;background:#d0d0d0;"></div><div style="left:884px;top:728px;width:1px;height:21px;background:#d0d0d0;"></div><svg style="left:890px;top:731px" width="16" height="16" viewBox="0 0 16 16" ><path d="M13.4 1.9H2.2L7.8 7.8L2.2 13.5H13.4" fill="none" stroke="#1555a8" stroke-width="1.4" stroke-linejoin="miter"/></svg><div style="left:910px;top:728px;width:1px;height:21px;background:#d0d0d0;"></div><svg style="left:915px;top:730px" width="18" height="18" viewBox="0 0 18 18" ><g transform="translate(0,1.5)"><path d="M2 13.4L3 9.8L11.6 1.2a1.6 1.6 0 0 1 2.3 0l.3 .3a1.6 1.6 0 0 1 0 2.3L5.6 12.4Z" fill="none" stroke="#1555a8" stroke-width="1.3" stroke-linejoin="round"/><path d="M10.4 2.6L12.9 5.1" stroke="#1555a8" stroke-width="1.1"/></g><path d="M8.2 15.3H15.8" stroke="#1555a8" stroke-width="1.4"/></svg><div style="left:944px;top:36px;width:4px;height:726px;background:#f0f0f0;"></div><div style="left:947px;top:36px;width:7px;height:723px;background:#00adef;"></div><div style="left:954px;top:36px;width:3px;height:723px;background:#f8f6f6;"></div><div style="left:949.3px;top:385.6px;width:2.8px;height:2.8px;background:#70d0f8;border-radius:1.4px;"></div><div style="left:949.3px;top:394.6px;width:2.8px;height:2.8px;background:#70d0f8;border-radius:1.4px;"></div><div style="left:949.3px;top:403.6px;width:2.8px;height:2.8px;background:#70d0f8;border-radius:1.4px;"></div><div style="left:957px;top:36px;width:227px;height:723px;background:#0054a6;"></div><div class="t" style="top:47.90px;font-size:20px;color:#ffffff;line-height:normal;white-space:nowrap;letter-spacing:-0.368px;left:964px;">Přijatá záloha 10/20...</div><svg style="left:1160px;top:48px" width="18" height="18" viewBox="0 0 18 18" ><g fill="none" stroke="#fff" stroke-width="1.3"><path d="M6.6 6.5H2.6V15H11V11"/><path d="M6.4 2.6H14.9V10.6"/><path d="M6.8 10.7L12 5.5"/></g><path d="M8.9 4.7H12.8V8.6Z" fill="#fff"/></svg><div style="left:960px;top:81px;width:221px;height:25px;background:#00adef;"></div><div class="t" style="top:86.73px;font-size:13px;color:#ffffff;line-height:normal;white-space:nowrap;font-weight:bold;letter-spacing:-0.022px;left:964px;">Základní údaje</div><div style="left:1156px;top:83px;width:1px;height:21px;background:#0c9ad6;"></div><svg style="left:1161px;top:88px" width="16" height="10" viewBox="0 0 16 10" ><path d="M0.8 8.6L7.4 2L14 8.6" fill="none" stroke="#fff" stroke-width="1.3"/></svg><div style="left:960px;top:106px;width:221px;height:300px;background:#fcfcfc;"></div><div class="t" style="top:112.84px;font-size:12px;color:#1750a8;line-height:normal;white-space:nowrap;letter-spacing:-0.586px;left:967px;">Zakázka:</div><div class="t" style="top:112.84px;font-size:12px;color:#000;line-height:normal;white-space:nowrap;letter-spacing:-0.006px;right:12.71px;">10/2021/16</div><div style="left:967px;top:127px;width:207px;height:1px;background:#e8e8e8;"></div><div class="t" style="top:134.84px;font-size:12px;color:#1750a8;line-height:normal;white-space:nowrap;letter-spacing:-0.105px;left:967px;">Odběratel:</div><div class="t" style="top:134.84px;font-size:12px;color:#000;line-height:normal;white-space:nowrap;letter-spacing:-0.106px;right:12.81px;">Potraviny Albertík; P. Bezr...</div><div style="left:967px;top:149px;width:207px;height:1px;background:#e8e8e8;"></div><div class="t" style="top:156.84px;font-size:12px;color:#1750a8;line-height:normal;white-space:nowrap;letter-spacing:-0.227px;left:967px;">Popis:</div><div style="left:967px;top:171px;width:207px;height:1px;background:#e8e8e8;"></div><div class="t" style="top:178.84px;font-size:12px;color:#1750a8;line-height:normal;white-space:nowrap;letter-spacing:0.164px;left:967px;">Netto:</div><div class="t" style="top:178.84px;font-size:12px;color:#1750a8;line-height:normal;white-space:nowrap;letter-spacing:-0.258px;right:12.96px;">Kč</div><div class="t" style="top:178.84px;font-size:12px;color:#000;line-height:normal;white-space:nowrap;letter-spacing:-0.634px;right:29.93px;">267,19</div><div style="left:967px;top:193px;width:207px;height:1px;background:#e8e8e8;"></div><div class="t" style="top:200.84px;font-size:12px;color:#1750a8;line-height:normal;white-space:nowrap;letter-spacing:-0.668px;left:967px;">DPH:</div><div class="t" style="top:200.84px;font-size:12px;color:#1750a8;line-height:normal;white-space:nowrap;letter-spacing:-0.258px;right:12.96px;">Kč</div><div class="t" style="top:200.84px;font-size:12px;color:#000;line-height:normal;white-space:nowrap;letter-spacing:-0.588px;right:29.89px;">56,11</div><div style="left:967px;top:215px;width:207px;height:1px;background:#e8e8e8;"></div><div class="t" style="top:222.84px;font-size:12px;color:#1750a8;line-height:normal;white-space:nowrap;font-weight:bold;letter-spacing:0.002px;left:967px;">Brutto:</div><div class="t" style="top:222.84px;font-size:12px;color:#1750a8;line-height:normal;white-space:nowrap;font-weight:bold;letter-spacing:-0.422px;right:13.12px;">Kč</div><div class="t" style="top:222.84px;font-size:12px;color:#000;line-height:normal;white-space:nowrap;font-weight:bold;letter-spacing:0.049px;right:30.65px;">323,30</div><div style="left:967px;top:237px;width:207px;height:1px;background:#e8e8e8;"></div><div class="t" style="top:244.84px;font-size:12px;color:#1750a8;line-height:normal;white-space:nowrap;letter-spacing:0.039px;left:967px;">Datum účetního případu:</div><div class="t" style="top:244.84px;font-size:12px;color:#000;line-height:normal;white-space:nowrap;letter-spacing:-0.606px;right:13.31px;">02.09.2021</div><div style="left:967px;top:259px;width:207px;height:1px;background:#e8e8e8;"></div><div class="t" style="top:266.84px;font-size:12px;color:#1750a8;line-height:normal;white-space:nowrap;letter-spacing:-0.302px;left:967px;">Datum UZP:</div><div class="t" style="top:266.84px;font-size:12px;color:#000;line-height:normal;white-space:nowrap;letter-spacing:-0.606px;right:13.31px;">02.09.2021</div><div style="left:967px;top:281px;width:207px;height:1px;background:#e8e8e8;"></div><div class="t" style="top:288.84px;font-size:12px;color:#1750a8;line-height:normal;white-space:nowrap;letter-spacing:0.017px;left:967px;">Datum splatnosti:</div><div class="t" style="top:288.84px;font-size:12px;color:#000;line-height:normal;white-space:nowrap;letter-spacing:-0.606px;right:13.31px;">16.09.2021</div><div style="left:967px;top:303px;width:207px;height:1px;background:#e8e8e8;"></div><div class="t" style="top:310.84px;font-size:12px;color:#1750a8;line-height:normal;white-space:nowrap;letter-spacing:-0.149px;left:967px;">Datum zaplacení:</div><div class="t" style="top:310.84px;font-size:12px;color:#000;line-height:normal;white-space:nowrap;letter-spacing:-0.606px;right:13.31px;">00.00.0000</div><div style="left:967px;top:325px;width:207px;height:1px;background:#e8e8e8;"></div><div class="t" style="top:332.84px;font-size:12px;color:#1750a8;line-height:normal;white-space:nowrap;letter-spacing:-0.125px;left:967px;">Zbývá zaplatit:</div><div class="t" style="top:332.84px;font-size:12px;color:#1750a8;line-height:normal;white-space:nowrap;letter-spacing:-0.258px;right:12.96px;">Kč</div><div class="t" style="top:332.84px;font-size:12px;color:#000;line-height:normal;white-space:nowrap;letter-spacing:-0.684px;right:29.98px;">323,30</div><div style="left:967px;top:347px;width:207px;height:1px;background:#e8e8e8;"></div><div class="t" style="top:354.84px;font-size:12px;color:#1750a8;line-height:normal;white-space:nowrap;letter-spacing:-0.096px;left:967px;">Zbývá dočerpat:</div><div class="t" style="top:354.84px;font-size:12px;color:#1750a8;line-height:normal;white-space:nowrap;font-weight:bold;letter-spacing:-0.422px;right:13.12px;">Kč</div><div class="t" style="top:354.84px;font-size:12px;color:#000;line-height:normal;white-space:nowrap;font-weight:bold;letter-spacing:0.160px;right:30.54px;">0,00</div><div style="left:967px;top:369px;width:207px;height:1px;background:#e8e8e8;"></div><div style="left:960px;top:370px;width:221px;height:29px;overflow:hidden;"><div class="t" style="left:7.5px;top:7.2px;font-size:12px;font-weight:bold;line-height:15px;color:#000;white-space:nowrap;">Nedaňový<br>doklad</div></div><div style="left:1099px;top:376px;width:23px;height:23px;background:#c4c4c4;border:1px solid #9a9a9a;"></div><svg style="left:1129px;top:379px" width="16" height="18" viewBox="0 0 16 18" ><path d="M3.6 8V5.4 a4 4 0 0 1 8 0 V8" fill="none" stroke="#3dbc78" stroke-width="1.9"/><rect x="0.2" y="7.4" width="14.8" height="9.6" fill="#3dbc78"/></svg><div style="left:960px;top:412px;width:221px;height:25px;background:#00adef;"></div><div class="t" style="top:417.73px;font-size:13px;color:#ffffff;line-height:normal;white-space:nowrap;font-weight:bold;letter-spacing:-0.028px;left:964px;">Ostatní údaje</div><div style="left:1156px;top:414px;width:1px;height:21px;background:#0c9ad6;"></div><svg style="left:1161px;top:419px" width="16" height="10" viewBox="0 0 16 10" ><path d="M0.8 8.6L7.4 2L14 8.6" fill="none" stroke="#fff" stroke-width="1.3"/></svg><div style="left:960px;top:437px;width:221px;height:51px;background:#fcfcfc;"></div><div class="t" style="top:444.14px;font-size:12px;color:#1750a8;line-height:normal;white-space:nowrap;letter-spacing:0.085px;left:967px;">Vytvořil:</div><div class="t" style="top:444.14px;font-size:12px;color:#1750a8;line-height:normal;white-space:nowrap;letter-spacing:-0.585px;right:12.59px;">02.09.2021 14:50:04</div><div class="t" style="top:444.14px;font-size:12px;color:#000;line-height:normal;white-space:nowrap;letter-spacing:-0.900px;right:115.90px;">K2</div><div style="left:967px;top:458px;width:207px;height:1px;background:#e8e8e8;"></div><div class="t" style="top:466.14px;font-size:12px;color:#1750a8;line-height:normal;white-space:nowrap;letter-spacing:-0.049px;left:967px;">Změnil:</div><div class="t" style="top:466.14px;font-size:12px;color:#1750a8;line-height:normal;white-space:nowrap;letter-spacing:-0.585px;right:12.59px;">02.09.2021 14:50:10</div><div class="t" style="top:466.14px;font-size:12px;color:#000;line-height:normal;white-space:nowrap;letter-spacing:-0.900px;right:115.90px;">K2</div><div style="left:967px;top:480px;width:207px;height:1px;background:#e8e8e8;"></div><div style="left:960px;top:680px;width:221px;height:25px;background:#00adef;"></div><div class="t" style="top:685.73px;font-size:13px;color:#ffffff;line-height:normal;white-space:nowrap;font-weight:bold;letter-spacing:-0.158px;left:964px;">Nastavení</div><div style="left:1156px;top:682px;width:1px;height:21px;background:#0c9ad6;"></div><svg style="left:1161px;top:687px" width="16" height="10" viewBox="0 0 16 10" ><path d="M0.8 8.6L7.4 2L14 8.6" fill="none" stroke="#fff" stroke-width="1.3"/></svg><div style="left:960px;top:705px;width:221px;height:52px;background:#fcfcfc;"></div><div class="t" style="top:712.14px;font-size:12px;color:#1750a8;line-height:normal;white-space:nowrap;letter-spacing:0.104px;left:974.5px;">Období</div><div class="t" style="top:712.14px;font-size:12px;color:#1750a8;line-height:normal;white-space:nowrap;letter-spacing:-0.406px;left:1081.5px;">Sklad</div><div style="left:967px;top:726px;width:101px;height:23px;background:#fffde6;border:1px solid #00adef;"></div><div style="left:1074px;top:726px;width:100px;height:23px;background:#fffde6;border:1px solid #00adef;"></div><div class="t" style="top:731.14px;font-size:12px;color:#000;line-height:normal;white-space:nowrap;letter-spacing:-0.051px;left:970px;">2021</div><svg style="left:1050.5px;top:733px" width="12" height="10" viewBox="0 0 12 10" ><g fill="none" stroke="#0054a6" stroke-width="1"><rect x="0.5" y="0.5" width="2" height="2"/><rect x="4.5" y="0.5" width="2" height="2"/><rect x="8.5" y="0.5" width="2" height="2"/><path d="M0.6 4.8L5.5 8.8L10.4 4.8" stroke-width="1.1"/></g></svg><svg style="left:1157px;top:733px" width="12" height="10" viewBox="0 0 12 10" ><g fill="none" stroke="#0054a6" stroke-width="1"><rect x="0.5" y="0.5" width="2" height="2"/><rect x="4.5" y="0.5" width="2" height="2"/><rect x="8.5" y="0.5" width="2" height="2"/><path d="M0.6 4.8L5.5 8.8L10.4 4.8" stroke-width="1.1"/></g></svg><div style="left:360px;top:226px;width:324px;height:412px;background:#ffffff;border:1px solid #6a6a6a;box-shadow:0 2px 17px 2px rgba(0,0,0,0.36);"></div><div style="left:361px;top:257px;width:322px;height:380px;background:#d9f2fd;"></div><div style="left:369px;top:233px;width:2px;height:16px;background:#0054a6;"></div><svg style="left:372px;top:238px" width="10" height="6" viewBox="0 0 10 6" ><path d="M1.1 1V4.9M4.2 1L1.9 2.95L4.2 4.9M5.4 1.7Q5.6 1 6.9 1Q8.6 1 8.6 2Q8.6 2.9 5.5 4.7H8.9" fill="none" stroke="#000" stroke-width="1.05"/></svg><svg style="left:373px;top:236px" width="13" height="14" viewBox="0 0 13 14" ><path d="M1.5 10.5 Q5 11.5 8.5 8.5 Q11 6.5 11.8 4.5 L12 10 Q11.5 12.8 8 12.8 Q4 12.8 1.5 10.5Z" fill="#1aa0f0"/><path d="M1.5 10.5 Q5 11 8 9 L6 12.5Z" fill="#40e8d8"/><path d="M9.5 1 L11 5 L10.3 1.2Z" fill="#3a7be0"/></svg><div class="t" style="top:235.14px;font-size:12px;color:#000;line-height:normal;white-space:nowrap;letter-spacing:0.038px;left:390px;">Platba interním dokladem</div><svg style="left:560px;top:232px" width="110" height="18" viewBox="0 0 110 18" ><path d="M4.5 9.5h10" stroke="#111" stroke-width="1.1" fill="none"/><rect x="49.5" y="4.5" width="9" height="9" stroke="#111" stroke-width="1.1" fill="none"/><path d="M95.2 4.2l9.6 9.6M104.8 4.2l-9.6 9.6" stroke="#111" stroke-width="1.1" fill="none"/></svg><div class="t" style="top:261.14px;font-size:12px;color:#1b4f9e;line-height:normal;white-space:nowrap;letter-spacing:0.003px;left:371.5px;">Kniha interních dokladů</div><div style="left:364px;top:275px;width:316px;height:23px;background:#fffde6;border:2px solid #0054a6;"></div><div style="left:367px;top:278px;width:27px;height:17px;background:#0b69d6;"></div><div class="t" style="top:280.64px;font-size:12px;color:#fff;line-height:normal;white-space:nowrap;letter-spacing:-0.656px;left:367px;">PLAT</div><div style="left:394px;top:278px;width:1px;height:17px;background:#ff8a20;"></div><svg style="left:663px;top:282px" width="12" height="10" viewBox="0 0 12 10" ><g fill="none" stroke="#0054a6" stroke-width="1"><rect x="0.5" y="0.5" width="2" height="2"/><rect x="4.5" y="0.5" width="2" height="2"/><rect x="8.5" y="0.5" width="2" height="2"/><path d="M0.6 4.8L5.5 8.8L10.4 4.8" stroke-width="1.1"/></g></svg><div class="t" style="top:305.14px;font-size:12px;color:#1b4f9e;line-height:normal;white-space:nowrap;letter-spacing:-0.033px;left:371.5px;">Měna dokladu</div><div style="left:364px;top:319px;width:316px;height:23px;background:#fffde6;border:1px solid #00adef;"></div><div class="t" style="top:324.94px;font-size:12px;color:#000;line-height:normal;white-space:nowrap;letter-spacing:-0.258px;left:367px;">Kč</div><svg style="left:663px;top:326px" width="12" height="10" viewBox="0 0 12 10" ><g fill="none" stroke="#0054a6" stroke-width="1"><rect x="0.5" y="0.5" width="2" height="2"/><rect x="4.5" y="0.5" width="2" height="2"/><rect x="8.5" y="0.5" width="2" height="2"/><path d="M0.6 4.8L5.5 8.8L10.4 4.8" stroke-width="1.1"/></g></svg><div class="t" style="top:349.14px;font-size:12px;color:#1b4f9e;line-height:normal;white-space:nowrap;letter-spacing:0.066px;left:371.5px;">Datum platby</div><div style="left:364px;top:363px;width:316px;height:23px;background:#fffde6;border:1px solid #00adef;"></div><div class="t" style="top:368.94px;font-size:12px;color:#000;line-height:normal;white-space:nowrap;letter-spacing:0.094px;right:528.91px;">03.09.2021</div><svg style="left:663px;top:368px" width="13" height="14" viewBox="0 0 13 14" ><g fill="none" stroke="#3a76bd" stroke-width="1.1"><rect x="0.8" y="2" width="10.8" height="10.4" rx="0.8"/><path d="M0.8 4.6H11.6" stroke-width="1.5"/><path d="M3.4 0.6V2.4M9 0.6V2.4"/></g><g fill="#3a76bd"><rect x="3" y="6.6" width="1" height="1"/><rect x="4.8" y="6.6" width="1" height="1"/><rect x="6.6" y="6.6" width="1" height="1"/><rect x="8.4" y="6.6" width="1" height="1"/><rect x="3" y="8.4" width="1" height="1"/><rect x="4.8" y="8.4" width="1" height="1"/><rect x="6.6" y="8.4" width="1" height="1"/><rect x="8.4" y="8.4" width="1" height="1"/><rect x="3" y="10.2" width="1" height="1"/><rect x="4.8" y="10.2" width="1" height="1"/></g></svg><div class="t" style="top:393.14px;font-size:12px;color:#1b4f9e;line-height:normal;white-space:nowrap;letter-spacing:-0.412px;left:371.5px;">Výše částky</div><div style="left:364px;top:407px;width:209px;height:23px;background:#fffde6;border:1px solid #00adef;"></div><div class="t" style="top:413.04px;font-size:12px;color:#000;line-height:normal;white-space:nowrap;letter-spacing:0.049px;right:615.95px;">100,00</div><div style="left:580px;top:410px;width:17px;height:17px;background:#0054a6;"></div><svg style="left:580px;top:410px" width="17" height="17" viewBox="0 0 17 17" ><path d="M3.8 8.8L7 11.9L13.2 5.3" fill="none" stroke="#fffde6" stroke-width="2"/></svg><div class="t" style="top:412.14px;font-size:12px;color:#1b4f9e;line-height:normal;white-space:nowrap;left:604px;">%</div><div style="left:365px;top:439px;width:17px;height:17px;background:#0054a6;"></div><svg style="left:365px;top:439px" width="17" height="17" viewBox="0 0 17 17" ><path d="M3.8 8.8L7 11.9L13.2 5.3" fill="none" stroke="#fffde6" stroke-width="2"/></svg><div class="t" style="top:440.94px;font-size:12px;color:#1b4f9e;line-height:normal;white-space:nowrap;letter-spacing:-0.060px;left:388.3px;">Částka - zbývá doplatit</div><div style="left:365px;top:468px;width:17px;height:17px;background:#fffde6;border:1px solid #0054a6;"></div><div class="t" style="top:469.94px;font-size:12px;color:#1b4f9e;line-height:normal;white-space:nowrap;letter-spacing:-0.081px;left:388.3px;">Zaokr. částku na celé jednotky</div><div style="left:365px;top:497px;width:17px;height:17px;background:#0054a6;"></div><svg style="left:365px;top:497px" width="17" height="17" viewBox="0 0 17 17" ><path d="M3.8 8.8L7 11.9L13.2 5.3" fill="none" stroke="#fffde6" stroke-width="2"/></svg><div class="t" style="top:498.94px;font-size:12px;color:#1b4f9e;line-height:normal;white-space:nowrap;letter-spacing:-0.025px;left:388.3px;">Platit i opravné daňové doklady</div><div style="left:365px;top:526px;width:17px;height:17px;background:#0054a6;"></div><svg style="left:365px;top:526px" width="17" height="17" viewBox="0 0 17 17" ><path d="M3.8 8.8L7 11.9L13.2 5.3" fill="none" stroke="#fffde6" stroke-width="2"/></svg><div class="t" style="top:527.94px;font-size:12px;color:#1b4f9e;line-height:normal;white-space:nowrap;letter-spacing:-0.048px;left:388.3px;">Jedním dokladem</div><div style="left:365px;top:555px;width:17px;height:17px;background:#fffde6;border:1px solid #0054a6;"></div><div class="t" style="top:556.94px;font-size:12px;color:#1b4f9e;line-height:normal;white-space:nowrap;letter-spacing:-0.082px;left:388.3px;">Srovnat přeplatky</div><div style="left:365px;top:584px;width:17px;height:17px;background:#fffde6;border:1px solid #0054a6;"></div><div class="t" style="top:585.94px;font-size:12px;color:#1b4f9e;line-height:normal;white-space:nowrap;letter-spacing:-0.044px;left:388.3px;">Nastavit kurz zálohy podle platby</div><div style="left:364px;top:607px;width:317px;height:1px;background:#b5e4fa;"></div><div style="left:472px;top:611px;width:101px;height:23px;background:#00adef;"></div><div style="left:579px;top:611px;width:101px;height:23px;background:#00adef;"></div><div class="t" style="top:616.14px;font-size:12px;color:#fff;line-height:normal;white-space:nowrap;letter-spacing:-0.900px;left:222.05px;width:600px;text-align:center;">OK</div><div class="t" style="top:616.14px;font-size:12px;color:#fff;line-height:normal;white-space:nowrap;letter-spacing:-0.060px;left:329.47px;width:600px;text-align:center;">Storno</div><div style="left:612.3px;top:628.5px;width:7px;height:1px;background:#fff;"></div>
</body></html>
